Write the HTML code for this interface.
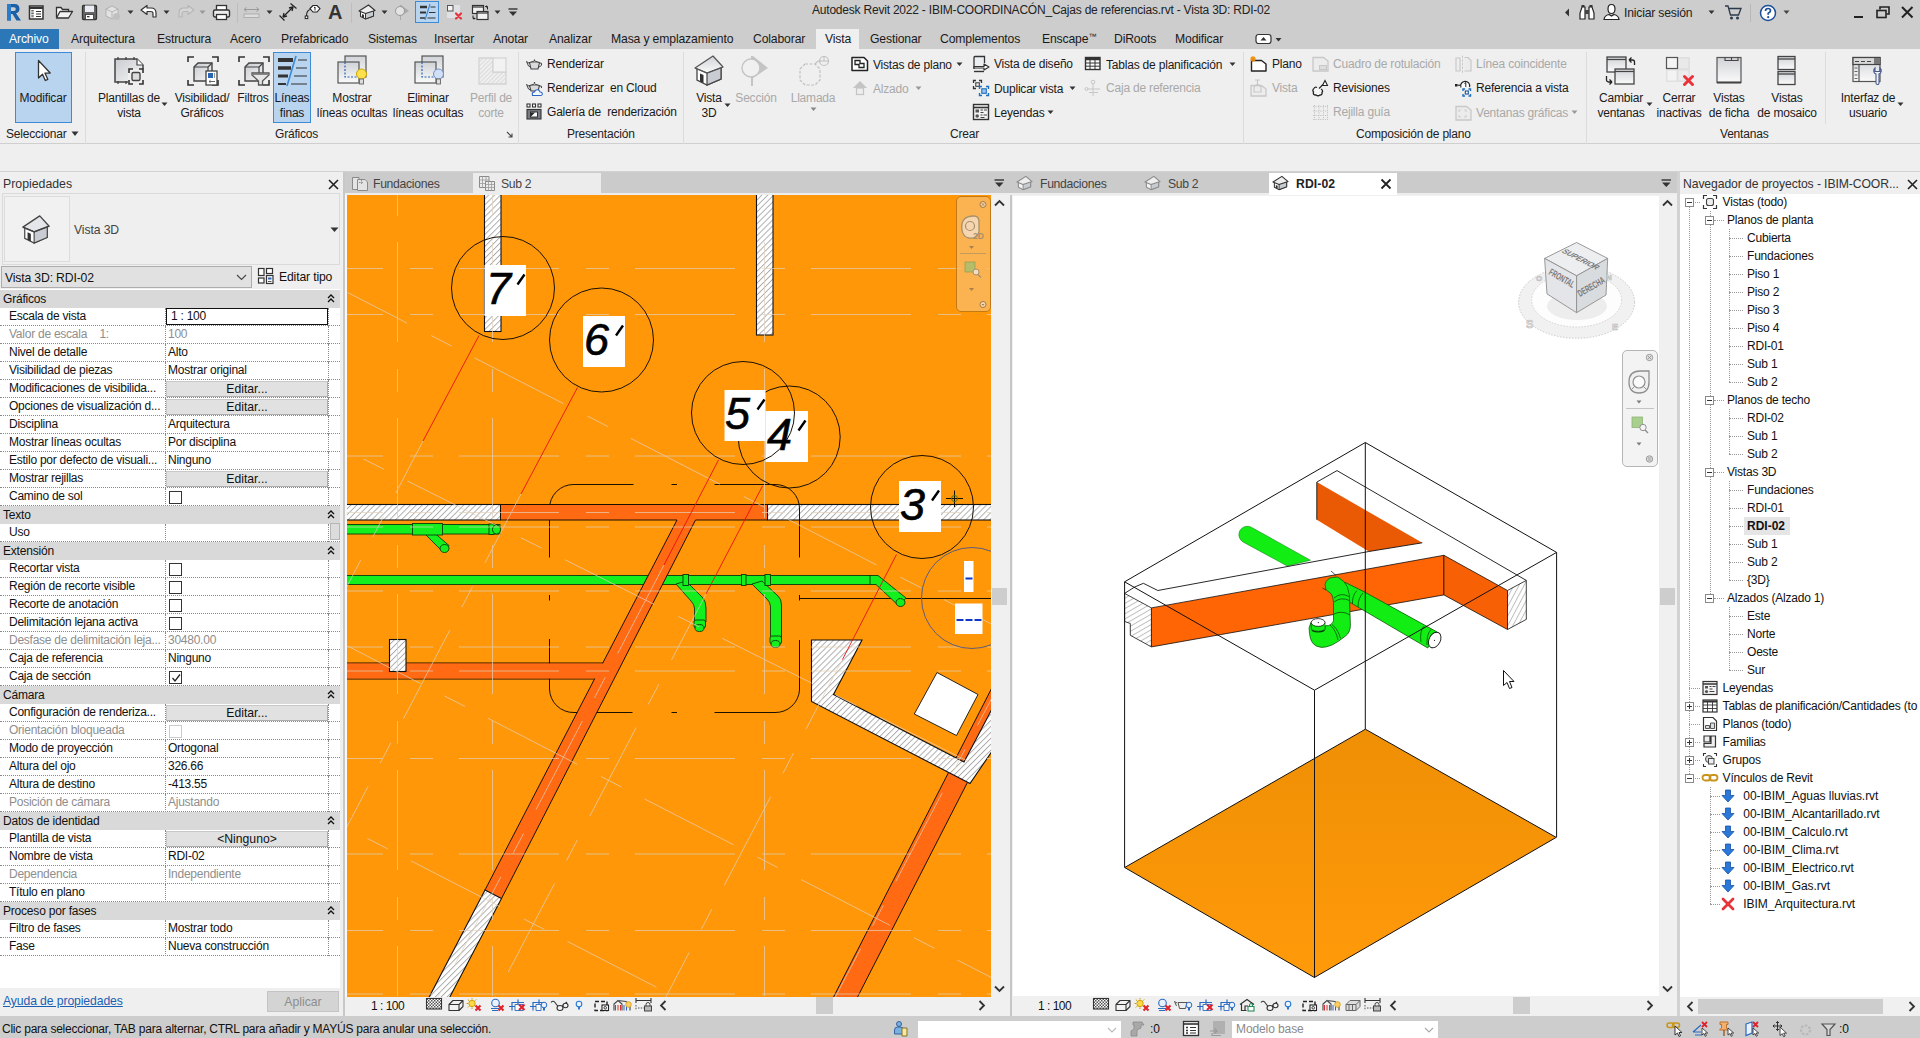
<!DOCTYPE html>
<html><head><meta charset="utf-8">
<style>
*{box-sizing:border-box;margin:0;padding:0}
html,body{width:1920px;height:1038px;overflow:hidden;background:#cdcdcd;font-family:"Liberation Sans",sans-serif;font-size:12px;color:#1a1a1a}
.abs{position:absolute}
#title{left:0;top:0;width:1920px;height:26px;background:#cdcdcd}
#title .t{position:absolute;left:812px;top:3px;font-size:12px;letter-spacing:-0.21px;color:#222;white-space:nowrap}
#tabs{left:0;top:26px;width:1920px;height:23px;background:#cdcdcd}
#tabs span{position:absolute;top:6px;font-size:12.2px;letter-spacing:-0.15px;white-space:nowrap;color:#1a1a1a}
#archivo{position:absolute;left:0;top:3px;width:59px;height:20px;background:#2b77b7}
#vistatab{position:absolute;left:816px;top:3px;width:43px;height:21px;background:#efefef}
#ribbon{left:0;top:49px;width:1920px;height:95px;background:#efefef;border-bottom:1px solid #cfcfcf}
#below{left:0;top:144px;width:1920px;height:28px;background:#efefef;border-bottom:1px solid #d2d2d2}
.rl{position:absolute;font-size:12px;letter-spacing:-0.2px;white-space:nowrap;color:#1a1a1a;text-align:center;line-height:15px;margin-top:1px}
.rl.dis{color:#a9a9a9}
.sep{position:absolute;top:52px;width:1px;height:92px;background:#dcdcdc}
.pt{position:absolute;top:127px;font-size:12px;letter-spacing:-0.2px;color:#222;white-space:nowrap}
svg{position:absolute;overflow:visible}
/* properties */
#props{left:0;top:172px;width:343px;height:846px;background:#efefef}
#props .hd{position:absolute;left:3px;top:5px;font-size:12.3px;color:#333}
.prow{position:absolute;left:0;width:340px;height:18px;background:#fff;border-bottom:1px dotted #8a8a8a}
.prow .l{position:absolute;left:9px;top:1px;white-space:nowrap;font-size:12px;letter-spacing:-0.25px;color:#111}
.prow .v{position:absolute;left:168px;top:1px;white-space:nowrap;font-size:12px;letter-spacing:-0.25px;color:#111}
.prow.g .l,.prow.g .v{color:#8e8e8e}
.prow:before{content:"";position:absolute;left:165px;top:0;width:0;height:18px;border-left:1px dotted #8a8a8a}
.prow:after{content:"";position:absolute;left:328px;top:0;width:0;height:18px;border-left:1px dotted #8a8a8a}
.phead{position:absolute;left:0;width:340px;height:18px;background:#d9d9d9}
.phead span{position:absolute;left:3px;top:2px;font-size:12px;letter-spacing:-0.2px;color:#111}
.pbtn{position:absolute;left:166px;top:1px;width:162px;height:16px;background:#e1e1e1;border:1px solid #adadad;border-top-color:#c8c8c8;border-left-color:#c8c8c8;text-align:center;font-size:12.2px;line-height:14px;color:#111}
.cb{position:absolute;left:169px;top:3px;width:13px;height:13px;border:1px solid #333;background:#fff}
/* view areas */
.vtabs{top:172px;height:23px;background:#cbcbcb}
.vtab{position:absolute;font-size:12.2px;letter-spacing:-0.3px;color:#444;white-space:nowrap}
#browser{left:1680px;top:172px;width:240px;height:844px;background:#fff;overflow:hidden}
.tn{position:absolute;font-size:12px;letter-spacing:-0.2px;white-space:nowrap;color:#111;line-height:16px}
#status{left:0;top:1016px;width:1920px;height:22px;background:#cdcdcd}
</style></head><body>
<div id="title" class="abs"><span class="t">Autodesk Revit 2022 - IBIM-COORDINACÓN_Cajas de referencias.rvt - Vista 3D: RDI-02</span>
<!-- R logo -->
<svg style="left:5px;top:2px" width="18" height="20" viewBox="0 0 18 20"><path d="M2 2 H9.500 Q14.500 2 14.500 6.800 Q14.500 10.500 11 11.300 L16 18.500 H11.500 L7.500 12 H6 V18.500 H2 Z M6 5.200 V9 H9 Q10.800 9 10.800 7.100 Q10.800 5.200 9 5.200 Z" fill="#1b5fa8" fill-rule="evenodd"/><path d="M2 2 H6 V18.500 H2 Z" fill="#2a7cc9"/></svg>
<!-- properties-ish icon -->
<svg style="left:28px;top:4px" width="17" height="17" viewBox="0 0 17 17"><rect x="1.500" y="2" width="13.500" height="13" fill="#fff" stroke="#333" stroke-width="1.500"/><path d="M1.500 4h13.500" stroke="#333" stroke-width="2"/><path d="M4.500 6v8" stroke="#666" stroke-width="2.500" stroke-dasharray="1.600 1"/><path d="M8 7.500h5M8 10h5M8 12.500h5" stroke="#333" stroke-width="1.100"/></svg>
<!-- open folder -->
<svg style="left:55px;top:5px" width="19" height="15" viewBox="0 0 19 15"><path d="M1.500 12.500 V2.500 H6 L7.500 4.500 H13.500 V6.500" fill="#fff" stroke="#333" stroke-width="1.300"/><path d="M1.500 13 L5 6.500 H17.500 L13.500 13 Z" fill="#f3f3f3" stroke="#333" stroke-width="1.300" stroke-linejoin="round"/></svg>
<!-- save -->
<svg style="left:81px;top:4px" width="17" height="17" viewBox="0 0 17 17"><rect x="1.500" y="1.500" width="14" height="14" rx="1" fill="#666" stroke="#333" stroke-width="1.300"/><rect x="4" y="1.500" width="9" height="6.500" fill="#e9ecf2"/><rect x="4.500" y="10.500" width="8" height="5" fill="#fff" stroke="#333" stroke-width="0.800"/><rect x="6" y="12" width="2.500" height="1.300" fill="#333"/></svg>
<!-- sync disabled -->
<svg style="left:104px;top:4px" width="19" height="18" viewBox="0 0 19 18"><path d="M2 5 L8 2 L14 5 V12 L8 15 L2 12 Z" fill="#e3e3e3" stroke="#b5b5b5" stroke-width="1.100"/><path d="M2 5 L8 8 L14 5 M8 8 V15" fill="none" stroke="#b5b5b5" stroke-width="1"/><circle cx="12.500" cy="12.500" r="3.500" fill="#c0c0c0"/></svg>
<svg style="left:127px;top:10px" width="7" height="5"><path d="M0.500 0.500h6l-3 3.500z" fill="#333"/></svg>
<!-- undo -->
<svg style="left:140px;top:4px" width="18" height="15" viewBox="0 0 18 15"><path d="M1 6 L7 1.500 V4 H11 Q16 4 16 9 V13 H13 V9.500 Q13 7.500 10.500 7.500 H7 V10.500 Z" fill="#fff" stroke="#333" stroke-width="1.200" stroke-linejoin="round"/></svg>
<svg style="left:163px;top:10px" width="7" height="5"><path d="M0.500 0.500h6l-3 3.500z" fill="#333"/></svg>
<!-- redo disabled -->
<svg style="left:177px;top:4px" width="18" height="15" viewBox="0 0 18 15"><path d="M17 6 L11 1.500 V4 H7 Q2 4 2 9 V13 H5 V9.500 Q5 7.500 7.500 7.500 H11 V10.500 Z" fill="#d6d6d6" stroke="#b5b5b5" stroke-width="1.100" stroke-linejoin="round"/></svg>
<svg style="left:199px;top:10px" width="7" height="5"><path d="M0.500 0.500h6l-3 3.500z" fill="#999"/></svg>
<!-- print -->
<svg style="left:212px;top:4px" width="19" height="17" viewBox="0 0 19 17"><rect x="4.500" y="1.500" width="10" height="5" fill="#fff" stroke="#333" stroke-width="1.300"/><rect x="1.500" y="6" width="16" height="7" rx="1.500" fill="#eee" stroke="#333" stroke-width="1.400"/><rect x="4.500" y="10.500" width="10" height="5" fill="#fff" stroke="#333" stroke-width="1.300"/></svg>
<div class="abs" style="left:237px;top:3px;width:1px;height:20px;background:#bdbdbd"></div>
<!-- measure disabled -->
<svg style="left:243px;top:6px" width="17" height="13" viewBox="0 0 17 13"><path d="M1 3.500h15M1 3.500l2.500-2M1 3.500l2.500 2M16 3.500l-2.500-2M16 3.500l-2.500 2" stroke="#9a9a9a" stroke-width="1" fill="none"/><rect x="1" y="8" width="15" height="3.500" fill="#ddd" stroke="#aaa" stroke-width="0.900"/></svg>
<svg style="left:266px;top:10px" width="7" height="5"><path d="M0.500 0.500h6l-3 3.500z" fill="#333"/></svg>
<!-- aligned dimension -->
<svg style="left:279px;top:3px" width="18" height="18" viewBox="0 0 18 18"><path d="M4 14 L14 4" stroke="#222" stroke-width="1.300"/><path d="M14 4 L10 5 M14 4 L13 8 M4 14 L8 13 M4 14 L5 10" stroke="#222" stroke-width="1.300"/><path d="M11.500 0.500 L17.500 5.500 M0.500 12.500 L5.500 17.500" stroke="#222" stroke-width="1.200"/></svg>
<!-- tag -->
<svg style="left:304px;top:4px" width="17" height="16" viewBox="0 0 17 16"><path d="M6 4.500 L9 1.500 H13 L16 4.500 L13 8 H9 Z" fill="#fff" stroke="#222" stroke-width="1.100"/><path d="M11 3v3.500M10 3.800l1-0.800" stroke="#222" stroke-width="1" fill="none"/><path d="M6.500 5.500 Q2.500 6 2.500 12" fill="none" stroke="#222" stroke-width="1.100"/><rect x="1.200" y="12" width="2.600" height="2.600" fill="#fff" stroke="#222" stroke-width="1"/></svg>
<!-- A text -->
<div class="abs" style="left:328px;top:0px;font-size:20px;font-weight:bold;color:#333;line-height:24px">A</div>
<div class="abs" style="left:351px;top:3px;width:1px;height:20px;background:#bdbdbd"></div>
<!-- 3D house small -->
<svg style="left:358px;top:4px" width="18" height="16" viewBox="0 0 18 16"><path d="M2.500 7.500 V12.500 L7.500 15 L15.500 12 V6.500" fill="#fff" stroke="#333" stroke-width="1.100"/><path d="M7.500 15 V9 L15.500 6.500 V12 Z" fill="#c8cbd0" stroke="#333" stroke-width="1"/><path d="M1 7 L10.500 1 L17 6.500 L7.500 9.500 Z" fill="#eee" stroke="#333" stroke-width="1.200" stroke-linejoin="round"/><path d="M4 10 L6 11 V14.200 L4 13.200Z" fill="#333"/></svg>
<svg style="left:381px;top:10px" width="7" height="5"><path d="M0.500 0.500h6l-3 3.500z" fill="#333"/></svg>
<!-- section gray -->
<svg style="left:394px;top:4px" width="16" height="17" viewBox="0 0 16 17"><path d="M7 1 L15 7 L7 12 V16 H6 V1 Z" fill="#aaa"/><circle cx="6" cy="7" r="4.500" fill="#e3e3e3" stroke="#999" stroke-width="1"/></svg>
<!-- thin lines active -->
<div class="abs" style="left:415px;top:1px;width:24px;height:22px;background:#b9d4ef;border:1px solid #3d8ad6"></div>
<svg style="left:419px;top:4px" width="17" height="16" viewBox="0 0 17 16"><path d="M1 3h7" stroke="#333" stroke-width="2.500"/><path d="M1 8.500h6" stroke="#333" stroke-width="2"/><path d="M1 14h5" stroke="#333" stroke-width="1.500"/><path d="M11.500 3h5M10 8.500h6.500M8.500 14h8" stroke="#333" stroke-width="1"/><path d="M11 0 L6 16" stroke="#3d8ad6" stroke-width="1.200"/></svg>
<!-- close inactive -->
<svg style="left:446px;top:4px" width="18" height="17" viewBox="0 0 18 17"><rect x="1" y="1" width="13" height="13" fill="#dfe1e4"/><rect x="1.500" y="1.500" width="5.500" height="5.500" fill="#f4f4f4" stroke="#555" stroke-width="1"/><path d="M7.500 7.500h0" /><path d="M10 9.500 L15 14.500 M15 9.500 L10 14.500" stroke="#e8333a" stroke-width="2.200" stroke-linecap="round"/></svg>
<!-- switch windows -->
<svg style="left:471px;top:4px" width="19" height="17" viewBox="0 0 19 17"><rect x="1.500" y="1.500" width="11" height="8" fill="#f2f2f2" stroke="#333" stroke-width="1.200"/><path d="M1.500 3h11" stroke="#333" stroke-width="1.200"/><rect x="6" y="7.500" width="11" height="8" fill="#f2f2f2" stroke="#333" stroke-width="1.200"/><path d="M6 9h11" stroke="#333" stroke-width="1.200"/><path d="M14.500 2.500h2v3M14.500 2.500l1-1M14.500 2.500l1 1" stroke="#222" stroke-width="1" fill="none"/><path d="M4 14.500h-2v-3M4 14.500l-1-1M4 14.500l-1 1" stroke="#222" stroke-width="1" fill="none"/></svg>
<svg style="left:494px;top:10px" width="7" height="5"><path d="M0.500 0.500h6l-3 3.500z" fill="#333"/></svg>
<svg style="left:508px;top:8px" width="10" height="9"><path d="M0.500 1h9" stroke="#333" stroke-width="1.400"/><path d="M1 3.500h8l-4 4.500z" fill="#333"/></svg>
<!-- right side title items -->
<svg style="left:1564px;top:8px" width="6" height="9"><path d="M5 0.500v8l-4-4z" fill="#333"/></svg>
<svg style="left:1578px;top:4px" width="18" height="17" viewBox="0 0 18 17"><path d="M2 15 V9 L4 3 H7 V15 Z M16 15 V9 L14 3 H11 V15 Z" fill="#fff" stroke="#222" stroke-width="1.200"/><rect x="7" y="6" width="4" height="4" fill="#444"/><rect x="3.500" y="1" width="3" height="2" fill="#333"/><rect x="11.500" y="1" width="3" height="2" fill="#333"/></svg>
<svg style="left:1603px;top:3px" width="17" height="18" viewBox="0 0 17 18"><path d="M8.500 1.500 Q12 1.500 12 6 Q12 10.500 8.500 10.500 Q5 10.500 5 6 Q5 1.500 8.500 1.500Z" fill="#fff" stroke="#222" stroke-width="1.200"/><path d="M1 16.500 Q1.500 12.500 6 11.500 L8.500 13 L11 11.500 Q15.500 12.500 16 16.500 Z" fill="#fff" stroke="#222" stroke-width="1.200"/></svg>
<div class="abs" style="left:1624px;top:6px;font-size:12.200px;letter-spacing:-0.200px;color:#222;white-space:nowrap">Iniciar sesión</div>
<svg style="left:1708px;top:10px" width="7" height="5"><path d="M0.500 0.500h6l-3 3.500z" fill="#333"/></svg>
<svg style="left:1724px;top:4px" width="18" height="17" viewBox="0 0 18 17"><path d="M1 2h3l2.500 9h8L17 4.500H5" fill="none" stroke="#2b3a4a" stroke-width="1.300"/><circle cx="7.500" cy="14" r="1.500" fill="#2b3a4a"/><circle cx="13.500" cy="14" r="1.500" fill="#2b3a4a"/></svg>
<div class="abs" style="left:1750px;top:4px;width:1px;height:18px;background:#b8b8b8"></div>
<svg style="left:1759px;top:4px" width="18" height="18" viewBox="0 0 18 18"><circle cx="9" cy="9" r="7.500" fill="#fff" stroke="#1b4f98" stroke-width="1.500"/><path d="M6.500 7 Q6.500 4.500 9 4.500 Q11.500 4.500 11.500 6.800 Q11.500 8.200 9.200 9.300 V10.800" fill="none" stroke="#1b4f98" stroke-width="1.700"/><circle cx="9.200" cy="13.200" r="1.100" fill="#1b4f98"/></svg>
<svg style="left:1783px;top:10px" width="7" height="5"><path d="M0.500 0.500h6l-3 3.500z" fill="#444"/></svg>
<div class="abs" style="left:1854px;top:16px;width:9px;height:2px;background:#222"></div>
<svg style="left:1876px;top:6px" width="14" height="13" viewBox="0 0 14 13"><path d="M4 3.500V1h9v7h-2.500" fill="none" stroke="#222" stroke-width="1.600"/><rect x="1" y="4.500" width="9" height="7" fill="none" stroke="#222" stroke-width="1.600"/></svg>
<svg style="left:1901px;top:6px" width="13" height="13"><path d="M1 1L11.500 11.500M11.500 1L1 11.500" stroke="#222" stroke-width="2"/></svg>

</div>
<div id="tabs" class="abs">
<div id="archivo"></div><div id="vistatab"></div>
<span style="left:9px;color:#fff">Archivo</span>
<span style="left:71px">Arquitectura</span>
<span style="left:157px">Estructura</span>
<span style="left:230px">Acero</span>
<span style="left:281px">Prefabricado</span>
<span style="left:368px">Sistemas</span>
<span style="left:434px">Insertar</span>
<span style="left:493px">Anotar</span>
<span style="left:549px">Analizar</span>
<span style="left:611px">Masa y emplazamiento</span>
<span style="left:753px">Colaborar</span>
<span style="left:825px">Vista</span>
<span style="left:870px">Gestionar</span>
<span style="left:940px">Complementos</span>
<span style="left:1042px">Enscape<span style="position:static;font-size:8px;vertical-align:top;line-height:10px">™</span></span>
<span style="left:1114px">DiRoots</span>
<span style="left:1175px">Modificar</span>
</div>
<div id="ribbon" class="abs"></div>
<div id="below" class="abs"></div>
<!-- ribbon large buttons -->
<div class="abs" style="left:15px;top:52px;width:57px;height:71px;background:#b9d4ef;border:1px solid #3d8ad6"></div>
<div class="abs" style="left:273px;top:52px;width:38px;height:71px;background:#b9d4ef;border:1px solid #3d8ad6"></div>
<div class="sep" style="left:85px"></div><div class="sep" style="left:518px"></div><div class="sep" style="left:683px"></div>
<div class="sep" style="left:1243px"></div><div class="sep" style="left:1586px"></div><div class="sep" style="left:1825px;height:72px"></div>
<div class="rl" style="left:13px;width:60px;top:90px">Modificar</div>
<div class="rl" style="left:89px;width:80px;top:90px">Plantillas de<br>vista</div>
<div class="rl" style="left:162px;width:80px;top:90px">Visibilidad/<br>Gráficos</div>
<div class="rl" style="left:228px;width:50px;top:90px">Filtros</div>
<div class="rl" style="left:262px;width:60px;top:90px">Líneas<br>finas</div>
<div class="rl" style="left:302px;width:100px;top:90px">Mostrar<br>líneas ocultas</div>
<div class="rl" style="left:378px;width:100px;top:90px">Eliminar<br>líneas ocultas</div>
<div class="rl dis" style="left:461px;width:60px;top:90px">Perfil de<br>corte</div>
<div class="rl" style="left:679px;width:60px;top:90px">Vista<br>3D</div>
<div class="rl dis" style="left:726px;width:60px;top:90px">Sección</div>
<div class="rl dis" style="left:783px;width:60px;top:90px">Llamada</div>
<div class="rl" style="left:1581px;width:80px;top:90px">Cambiar<br>ventanas</div>
<div class="rl" style="left:1639px;width:80px;top:90px">Cerrar<br>inactivas</div>
<div class="rl" style="left:1689px;width:80px;top:90px">Vistas<br>de ficha</div>
<div class="rl" style="left:1747px;width:80px;top:90px">Vistas<br>de mosaico</div>
<div class="rl" style="left:1828px;width:80px;top:90px">Interfaz de<br>usuario</div>
<!-- small button labels -->
<div class="rl" style="left:547px;top:56px">Renderizar</div>
<div class="rl" style="left:547px;top:80px">Renderizar&nbsp; en Cloud</div>
<div class="rl" style="left:547px;top:104px">Galería de&nbsp; renderización</div>
<div class="rl" style="left:873px;top:57px">Vistas de plano</div>
<div class="rl dis" style="left:873px;top:81px">Alzado</div>
<div class="rl" style="left:994px;top:56px">Vista de diseño</div>
<div class="rl" style="left:994px;top:81px">Duplicar vista</div>
<div class="rl" style="left:994px;top:105px">Leyendas</div>
<div class="rl" style="left:1106px;top:57px">Tablas de planificación</div>
<div class="rl dis" style="left:1106px;top:80px">Caja de referencia</div>
<div class="rl" style="left:1272px;top:56px">Plano</div>
<div class="rl dis" style="left:1272px;top:80px">Vista</div>
<div class="rl dis" style="left:1333px;top:56px">Cuadro de rotulación</div>
<div class="rl" style="left:1333px;top:80px">Revisiones</div>
<div class="rl dis" style="left:1333px;top:104px">Rejilla guía</div>
<div class="rl dis" style="left:1476px;top:56px">Línea coincidente</div>
<div class="rl" style="left:1476px;top:80px">Referencia a vista</div>
<div class="rl dis" style="left:1476px;top:105px">Ventanas gráficas</div>
<!-- panel titles -->
<div class="pt" style="left:6px">Seleccionar</div>
<div class="pt" style="left:275px">Gráficos</div>
<div class="pt" style="left:567px">Presentación</div>
<div class="pt" style="left:950px">Crear</div>
<div class="pt" style="left:1356px">Composición de plano</div>
<div class="pt" style="left:1720px">Ventanas</div>
<svg width="0" height="0"><defs>
<linearGradient id="gg" x1="0" y1="0" x2="1" y2="1"><stop offset="0" stop-color="#c9ccd0"/><stop offset="1" stop-color="#f6f6f6"/></linearGradient>
<linearGradient id="gg2" x1="0" y1="0" x2="0" y2="1"><stop offset="0" stop-color="#d0d3d7"/><stop offset="1" stop-color="#fafafa"/></linearGradient>
</defs></svg>
<!-- Modificar cursor -->
<svg style="left:27px;top:54px" width="32" height="32" viewBox="0 0 32 32"><path d="M11.5 6.5 L11.5 24 L15.5 20.2 L18.3 26.5 L20.8 25.3 L18 19.2 L23.2 19 Z" fill="#fff" stroke="#333" stroke-width="1.3" stroke-linejoin="round"/></svg>
<!-- Plantillas de vista -->
<svg style="left:113px;top:55px" width="32" height="32" viewBox="0 0 32 32"><path d="M2 4 H24 L30 10 V27 H2 Z" fill="url(#gg)" stroke="#444" stroke-width="1.5"/><path d="M24 4 V10 H30" fill="#fff" stroke="#444" stroke-width="1.2"/><path d="M5 2v3M13 2v3M21 2v3M5 26v3M13 26v3" stroke="#444" stroke-width="1.3"/><rect x="15" y="14" width="16" height="16" fill="#efefef"/><path d="M16 18v-4h4M26 14h4v4M30 25v4h-4M20 29h-4v-4" fill="none" stroke="#333" stroke-width="1.6"/><rect x="19" y="17.500" width="8" height="8" rx="1.500" fill="#ddd" stroke="#444" stroke-width="1.4"/></svg>
<!-- Visibilidad/Graficos -->
<svg style="left:187px;top:55px" width="32" height="32" viewBox="0 0 32 32"><path d="M1 7V2h6M25 2h6v5M31 25v5h-6M7 30H1v-5" fill="none" stroke="#333" stroke-width="1.6"/><path d="M7 12 L11 8 H25 V22 L21 26 H7 Z" fill="url(#gg)" stroke="#444" stroke-width="1.4"/><path d="M7 12 H21 V26 M21 12 L25 8" fill="none" stroke="#444" stroke-width="1.2"/><rect x="19" y="16" width="11" height="14" fill="#fff" stroke="#444" stroke-width="1.3"/><rect x="21" y="18" width="5" height="5" fill="#2b63b5"/><path d="M27.500 18v5" stroke="#999" stroke-width="1.2"/><path d="M22 26.500h6M22 26.500l1.500-1.200M22 26.500l1.500 1.200" stroke="#555" stroke-width="0.9"/></svg>
<!-- Filtros -->
<svg style="left:238px;top:55px" width="32" height="32" viewBox="0 0 32 32"><path d="M1 7V2h6M25 2h6v5M31 25v5h-6M7 30H1v-5" fill="none" stroke="#333" stroke-width="1.6"/><path d="M7 12 L11 8 H25 V22 L21 26 H7 Z" fill="url(#gg)" stroke="#444" stroke-width="1.4"/><path d="M7 12 H21 V26 M21 12 L25 8" fill="none" stroke="#444" stroke-width="1.2"/><path d="M14 18 H31 V20 L24.500 26 V30 H20.500 V26 L14 20 Z" fill="#e6e6e6" stroke="#555" stroke-width="1.3"/><path d="M14 19.500h17" stroke="#888" stroke-width="1"/></svg>
<!-- Lineas finas -->
<svg style="left:276px;top:55px" width="32" height="32" viewBox="0 0 32 32"><path d="M2 5h15" stroke="#333" stroke-width="4"/><path d="M2 13h13" stroke="#333" stroke-width="3.500"/><path d="M2 21h10" stroke="#333" stroke-width="3"/><path d="M2 29h8" stroke="#333" stroke-width="2"/><path d="M22 5h9M20 13h11M18 21h13M15 29h16" stroke="#333" stroke-width="1.100"/><path d="M20 1 L11 31" stroke="#3d8ad6" stroke-width="1.600"/></svg>
<!-- Mostrar lineas ocultas -->
<svg style="left:336px;top:54px" width="32" height="32" viewBox="0 0 32 32"><rect x="9" y="2" width="21" height="21" fill="url(#gg2)" stroke="#555" stroke-width="1.200"/><rect x="2" y="8" width="21" height="21" fill="url(#gg2)" stroke="#555" stroke-width="1.200"/><path d="M9 8v15h14" fill="none" stroke="#2b63b5" stroke-width="1.200" stroke-dasharray="2 1.500"/><circle cx="25.500" cy="20" r="5" fill="#ffe14d" stroke="#c9a400" stroke-width="1"/><rect x="23.500" y="25" width="4" height="5" fill="#ddd" stroke="#666" stroke-width="0.900"/></svg>
<!-- Eliminar lineas ocultas -->
<svg style="left:413px;top:54px" width="32" height="32" viewBox="0 0 32 32"><rect x="9" y="2" width="21" height="21" fill="url(#gg2)" stroke="#555" stroke-width="1.200"/><rect x="2" y="8" width="21" height="21" fill="url(#gg2)" stroke="#555" stroke-width="1.200"/><path d="M9 8v15h14" fill="none" stroke="#2b63b5" stroke-width="1.200" stroke-dasharray="2 1.500"/><circle cx="25.500" cy="20" r="5" fill="#cfe0f7" stroke="#6f8fc9" stroke-width="1"/><rect x="23.500" y="25" width="4" height="5" fill="#ddd" stroke="#666" stroke-width="0.900"/></svg>
<!-- Perfil de corte (disabled) -->
<svg style="left:477px;top:55px" width="32" height="32" viewBox="0 0 32 32"><defs><pattern id="hp" width="3" height="3" patternUnits="userSpaceOnUse" patternTransform="rotate(-45)"><path d="M0 0h3" stroke="#cfcfcf" stroke-width="1.200"/></pattern></defs><path d="M2 3h14v14h13v12H2z" fill="url(#hp)" stroke="#d4d4d4" stroke-width="1.300"/><rect x="16" y="3" width="13" height="14" fill="#f2f2f2" stroke="#d4d4d4" stroke-width="1.300"/></svg>
<!-- Vista 3D house -->
<svg style="left:693px;top:54px" width="32" height="32" viewBox="0 0 32 32"><path d="M4 15 L4 26 L14 31 L28 25 L28 14" fill="#fff" stroke="#444" stroke-width="1.300"/><path d="M14 31 V18 L28 13 V25 Z" fill="#c9ccd2" stroke="#444" stroke-width="1.200"/><path d="M2 14 L20 2 L30 13 L14 19 Z" fill="url(#gg2)" stroke="#555" stroke-width="1.200" stroke-linejoin="round"/><path d="M2 14 L14 19 L30 13" fill="none" stroke="#555" stroke-width="1.200"/><path d="M7 19.500 L10.500 21 V29 L7 27.500 Z" fill="#333"/></svg>
<!-- Seccion disabled -->
<svg style="left:740px;top:54px" width="32" height="32" viewBox="0 0 32 32"><path d="M13 2 L28 14 L13 24 V32 H11 V2 Z" fill="#c4c4c4"/><circle cx="11" cy="14" r="9" fill="#f0f0f0" stroke="#c4c4c4" stroke-width="1.400"/></svg>
<!-- Llamada disabled -->
<svg style="left:797px;top:54px" width="32" height="32" viewBox="0 0 32 32"><path d="M8 10 H18 L23 15 V26 L18 31 H8 L3 26 V15 Z" fill="none" stroke="#c0c0c0" stroke-width="1.200" stroke-dasharray="3 1.500"/><path d="M18 10 L21 7 H24" fill="none" stroke="#c0c0c0" stroke-width="1.100"/><circle cx="27" cy="7" r="4.500" fill="none" stroke="#c0c0c0" stroke-width="1.200"/><path d="M22.500 7h9M27 2.500v4.500" stroke="#c0c0c0" stroke-width="1"/></svg>
<!-- Cambiar ventanas -->
<svg style="left:1605px;top:55px" width="32" height="32" viewBox="0 0 32 32"><rect x="2" y="2" width="19" height="15" fill="url(#gg2)" stroke="#444" stroke-width="1.300"/><path d="M2 4.500h19" stroke="#444" stroke-width="1.200"/><rect x="10" y="14" width="19" height="15" fill="url(#gg2)" stroke="#444" stroke-width="1.300"/><path d="M10 16.500h19" stroke="#444" stroke-width="1.200"/><path d="M24 5 h3.500 a2 2 0 0 1 2 2 v3 M24 5 l2.500 -2.500 M24 5 l2.500 2.500" fill="none" stroke="#222" stroke-width="1.300"/><path d="M7 27 h-3.500 a2 2 0 0 1 -2 -2 v-4 M7 27 l-2.500 -2.500 M7 27 l-2.500 2.500" fill="none" stroke="#222" stroke-width="1.300"/></svg>
<!-- Cerrar inactivas -->
<svg style="left:1664px;top:55px" width="32" height="32" viewBox="0 0 32 32"><rect x="2" y="2" width="24" height="25" fill="#e3e5e8"/><rect x="14" y="3" width="11" height="11" fill="#e9e9ea" stroke="#d8d8d8" stroke-width="0.800"/><rect x="3" y="15" width="10" height="11" fill="#f3f3f3" stroke="#dcdcdc" stroke-width="0.800"/><rect x="14" y="15" width="11" height="11" fill="#ececec" stroke="#dcdcdc" stroke-width="0.800"/><rect x="2.500" y="2.500" width="11" height="11" fill="#f4f4f4" stroke="#555" stroke-width="1.200"/><path d="M20.500 21.500 L28.500 29.500 M28.500 21.500 L20.500 29.500" stroke="#e8333a" stroke-width="3" stroke-linecap="round"/></svg>
<!-- Vistas de ficha -->
<svg style="left:1713px;top:55px" width="32" height="32" viewBox="0 0 32 32"><rect x="4" y="2.500" width="24" height="25" fill="url(#gg2)" stroke="#555" stroke-width="1.200"/><path d="M4 27.500h24" stroke="#444" stroke-width="2"/><path d="M12 2.500v3h13v-3M18.500 2.500v3" fill="none" stroke="#444" stroke-width="1.100"/></svg>
<!-- Vistas de mosaico -->
<svg style="left:1771px;top:55px" width="32" height="32" viewBox="0 0 32 32"><rect x="7" y="1.500" width="17" height="13" fill="url(#gg2)" stroke="#444" stroke-width="1.300"/><path d="M7 4h17" stroke="#444" stroke-width="1.300"/><rect x="7" y="16.500" width="17" height="13" fill="url(#gg2)" stroke="#444" stroke-width="1.300"/><path d="M7 19h17" stroke="#444" stroke-width="1.300"/></svg>
<!-- Interfaz de usuario -->
<svg style="left:1851px;top:55px" width="32" height="32" viewBox="0 0 32 32"><rect x="2" y="2.500" width="27" height="24" fill="url(#gg2)" stroke="#555" stroke-width="1.200"/><rect x="2" y="2.500" width="27" height="7" fill="#d9d9d9" stroke="#444" stroke-width="1.200"/><rect x="23" y="3" width="5.500" height="6" fill="#777"/><path d="M4 6.500h4M10 6.500h4M16 6.500h4" stroke="#444" stroke-width="1.100"/><path d="M8 9.500v17" stroke="#444" stroke-width="1.100"/><path d="M3.500 13h3M3.500 16.500h3M3.500 20h3M3.500 23.500h3" stroke="#666" stroke-width="1"/><path d="M24 13 a3.500 3.500 0 0 0 1 6 v9 a1.500 1.500 0 0 0 3 0 v-9 a3.500 3.500 0 0 0 1 -6 v3.500 h-5 Z" fill="#eef1fa" stroke="#4a5a8a" stroke-width="1.100"/></svg>
<!-- dropdown arrows for big buttons -->
<svg style="left:161px;top:102px" width="8" height="5"><path d="M0.500 0.500h6l-3 3.500z" fill="#333"/></svg>
<svg style="left:724px;top:103px" width="8" height="5"><path d="M0.500 0.500h6l-3 3.500z" fill="#333"/></svg>
<svg style="left:810px;top:107px" width="8" height="5"><path d="M0.500 0.500h6l-3 3.500z" fill="#888"/></svg>
<svg style="left:1646px;top:102px" width="8" height="5"><path d="M0.500 0.500h6l-3 3.500z" fill="#333"/></svg>
<svg style="left:1897px;top:102px" width="8" height="5"><path d="M0.500 0.500h6l-3 3.500z" fill="#333"/></svg>
<svg style="left:71px;top:131px" width="9" height="6"><path d="M0.500 0.500h7l-3.500 4.500z" fill="#333"/></svg>
<svg style="left:506px;top:131px" width="8" height="8"><path d="M1 1L6 6M6 2.500V6H2.500" stroke="#444" stroke-width="1.100" fill="none"/></svg>
<!-- Renderizar teapot -->
<svg style="left:526px;top:57px" width="17" height="16" viewBox="0 0 17 16"><path d="M3.500 5.500 H13.500 L12 12 H5 Z" fill="#d9dadc" stroke="#444" stroke-width="1.100"/><path d="M3.500 5.500 Q8.500 2.500 13.500 5.500" fill="#eee" stroke="#444" stroke-width="1"/><path d="M8.500 2.500v1.500" stroke="#444" stroke-width="1.200"/><path d="M3.500 6.500 L0.500 4.500 L2.500 9 L4.300 10" fill="none" stroke="#444" stroke-width="1"/><path d="M13.500 6 Q16.500 5.500 15.500 8 Q14.500 10 12.700 10" fill="none" stroke="#444" stroke-width="1"/></svg>
<!-- Renderizar en cloud -->
<svg style="left:526px;top:80px" width="17" height="17" viewBox="0 0 17 17"><path d="M3.500 5.500 H13.500 L12 11 H5 Z" fill="#d9dadc" stroke="#444" stroke-width="1.100"/><path d="M3.500 5.500 Q8.500 2.500 13.500 5.500" fill="#eee" stroke="#444" stroke-width="1"/><path d="M8.500 2v1.500" stroke="#444" stroke-width="1.200"/><path d="M3.500 6.500 L0.500 4.500 L2.500 9 L4.300 10" fill="none" stroke="#444" stroke-width="1"/><path d="M13.500 6 Q16.500 5.500 15.500 8" fill="none" stroke="#444" stroke-width="1"/><path d="M6.500 15.500 H14.500 Q16.500 15.500 16.300 13.500 Q16 11.800 14 12 Q13.500 9.500 11 9.800 Q9 10 8.500 12 Q5.500 12 6.500 15.500Z" fill="#f4f8ff" stroke="#2b63c5" stroke-width="1.100"/></svg>
<!-- Galeria -->
<svg style="left:526px;top:103px" width="17" height="17" viewBox="0 0 17 17"><rect x="1" y="1" width="3" height="3" fill="#fff" stroke="#333" stroke-width="1.100"/><rect x="6.500" y="1" width="3" height="3" fill="#fff" stroke="#333" stroke-width="1.100"/><rect x="12" y="1" width="3" height="3" fill="#fff" stroke="#333" stroke-width="1.100"/><rect x="1" y="6.500" width="14" height="9.500" fill="#777b82" stroke="#333" stroke-width="1.100"/><rect x="4.500" y="9" width="7" height="5" fill="#fff" stroke="#222" stroke-width="0.900"/><path d="M5 9.500h4l-4 4z" fill="#222"/></svg>
<!-- Vistas de plano -->
<svg style="left:851px;top:56px" width="18" height="16" viewBox="0 0 18 16"><path d="M1 1.500 H13 L16.500 5 V14.500 H1 Z" fill="#fff" stroke="#222" stroke-width="1.500" stroke-linejoin="round"/><path d="M4 4.500 h5 v3 h4 v4 h-5 v-3 h-4 z" fill="none" stroke="#222" stroke-width="1.300"/></svg>
<!-- Alzado disabled -->
<svg style="left:852px;top:80px" width="16" height="16" viewBox="0 0 16 16"><path d="M8 1 L15 8 H1 Z" fill="#c4c4c4"/><rect x="4.500" y="8" width="7" height="6.500" fill="#ededed" stroke="#c4c4c4" stroke-width="1.200"/></svg>
<svg style="left:956px;top:62px" width="8" height="5"><path d="M0.500 0.500h6l-3 3.500z" fill="#333"/></svg>
<svg style="left:915px;top:86px" width="8" height="5"><path d="M0.500 0.500h6l-3 3.500z" fill="#999"/></svg>
<!-- Vista de diseño -->
<svg style="left:972px;top:55px" width="18" height="18" viewBox="0 0 18 18"><path d="M2 14V2.500 Q2 1.500 3 1.500 H12.500 V8" fill="#eceff2" stroke="#333" stroke-width="1.300"/><path d="M2 16.500 H12" stroke="#333" stroke-width="1.400"/><path d="M2 11.500 H12 V9 L17 12 L12 15 V13 H2 Z" fill="#fff" stroke="#333" stroke-width="1.200" stroke-linejoin="round"/></svg>
<!-- Duplicar vista -->
<svg style="left:972px;top:79px" width="18" height="18" viewBox="0 0 18 18"><path d="M1.500 4V1.500H4M7 1.500H9.500V4M9.500 7M4 9.500H1.500V7" fill="none" stroke="#333" stroke-width="1.300"/><rect x="3.800" y="3.800" width="3.500" height="3.500" fill="none" stroke="#333" stroke-width="1"/><path d="M7.500 10V7.500H10M14 7.500H16.500V10M16.500 14V16.500H14M10 16.500H7.500V14" fill="none" stroke="#1d6fc0" stroke-width="1.400"/><rect x="9.800" y="9.800" width="4.500" height="4.500" fill="#9cc3ee" stroke="#1d6fc0" stroke-width="1.100"/></svg>
<!-- Leyendas -->
<svg style="left:972px;top:103px" width="18" height="18" viewBox="0 0 18 18"><rect x="1.500" y="1.500" width="15" height="15" fill="#f4f4f4" stroke="#333" stroke-width="1.400"/><path d="M1.500 4.500h15" stroke="#333" stroke-width="1.600"/><rect x="3.500" y="6.500" width="3.500" height="3" fill="#555"/><circle cx="5.200" cy="13" r="1.800" fill="#555"/><path d="M8.500 7h2.500M12 7h3M8.500 9.500h3M8.500 12h2M11.500 12h3.500M8.500 14.500h4" stroke="#444" stroke-width="1.100"/></svg>
<svg style="left:1069px;top:86px" width="8" height="5"><path d="M0.500 0.500h6l-3 3.500z" fill="#333"/></svg>
<svg style="left:1047px;top:110px" width="8" height="5"><path d="M0.500 0.500h6l-3 3.500z" fill="#333"/></svg>
<!-- Tablas -->
<svg style="left:1084px;top:56px" width="18" height="16" viewBox="0 0 18 16"><rect x="1.500" y="1.500" width="14.500" height="12" fill="#fff" stroke="#333" stroke-width="1.400"/><path d="M1.500 3h14.500" stroke="#333" stroke-width="2.500"/><path d="M1.500 7h14.500M1.500 10.200h14.500M6 4v9.500M11 4v9.500" stroke="#333" stroke-width="1"/></svg>
<svg style="left:1229px;top:62px" width="8" height="5"><path d="M0.500 0.500h6l-3 3.500z" fill="#333"/></svg>
<!-- Caja de referencia disabled -->
<svg style="left:1084px;top:79px" width="18" height="18" viewBox="0 0 18 18"><circle cx="9" cy="3" r="1.800" fill="none" stroke="#c6c6c6" stroke-width="1"/><path d="M9 5v12M3 10h13M5 13.500h9" stroke="#c6c6c6" stroke-width="1"/><circle cx="2.500" cy="10" r="1.500" fill="none" stroke="#c6c6c6" stroke-width="1"/></svg>
<!-- Plano -->
<svg style="left:1249px;top:55px" width="19" height="18" viewBox="0 0 19 18"><path d="M2.500 5.500 H12.500 L17 9 V16 H2.500 Z" fill="#fff" stroke="#222" stroke-width="1.400" stroke-linejoin="round"/><path d="M4 1v6M1 4h6M2 2l4 4M6 2l-4 4" stroke="#f08a00" stroke-width="1.100"/></svg>
<!-- Vista disabled -->
<svg style="left:1249px;top:79px" width="19" height="18" viewBox="0 0 19 18"><path d="M2 6.500 H12.500 L17 10 V17 H2 Z" fill="#ececec" stroke="#c8c8c8" stroke-width="1.300"/><path d="M6 1h5M8.500 1v4M5 8l3.500-3l3.500 3v5h-7z" fill="none" stroke="#c8c8c8" stroke-width="1.100"/></svg>
<!-- Cuadro de rotulacion disabled -->
<svg style="left:1311px;top:55px" width="19" height="18" viewBox="0 0 19 18"><path d="M2 2.500 H12.500 L17 6 V16 H2 Z" fill="#ececec" stroke="#c8c8c8" stroke-width="1.300"/><rect x="8.500" y="10.500" width="7" height="4" fill="#ddd" stroke="#c8c8c8" stroke-width="1"/></svg>
<!-- Revisiones -->
<svg style="left:1311px;top:79px" width="19" height="18" viewBox="0 0 19 18"><path d="M3 9.500 Q1 11 2.500 13 Q1.500 16 5 16 Q7 17.500 9 16 Q11.500 16 11 13.500 Q12.500 11.500 10 10" fill="#f6f6f6" stroke="#222" stroke-width="1.300"/><path d="M3 9.500 Q4 7.500 6 8.500" fill="none" stroke="#222" stroke-width="1.300"/><path d="M8 9.500 L12 5.500" stroke="#222" stroke-width="1.100"/><path d="M11.500 6.500 L14 1.500 L16.500 6.500 Z" fill="#fff" stroke="#222" stroke-width="1.100"/></svg>
<!-- Rejilla guia disabled -->
<svg style="left:1312px;top:104px" width="17" height="17" viewBox="0 0 17 17"><path d="M1 2.500h15M1 7h15M1 11.500h15M1 15.500h15M2.500 1v15M7 1v15M11.500 1v15M15.500 1v15" stroke="#c4c4c4" stroke-width="1" stroke-dasharray="1.200 1.200"/></svg>
<!-- Linea coincidente disabled -->
<svg style="left:1454px;top:55px" width="19" height="18" viewBox="0 0 19 18"><path d="M2 3 H6 V16 H2 Z" fill="none" stroke="#c8c8c8" stroke-width="1.200"/><path d="M10.500 2.500 H14 L17 5.500 V16 H10.500" fill="#ececec" stroke="#c8c8c8" stroke-width="1.200"/><path d="M8.500 0.500V18" stroke="#c8c8c8" stroke-width="1" stroke-dasharray="2.500 1.200"/></svg>
<!-- Referencia a vista -->
<svg style="left:1454px;top:79px" width="19" height="18" viewBox="0 0 19 18"><rect x="1" y="5" width="2.500" height="2.500" fill="#222"/><path d="M3.500 6.200H7" stroke="#222" stroke-width="1.100"/><path d="M7 8.500 A4.500 4.500 0 1 1 15.500 8" fill="#fff" stroke="#222" stroke-width="1.200"/><path d="M10.500 4.500 L11.800 3.500 V8" fill="none" stroke="#222" stroke-width="1"/><path d="M9 12V10H11M14.500 10H16.500V12M16.500 15V17H14.500M11 17H9V15" fill="none" stroke="#1d6fc0" stroke-width="1.400"/><rect x="11.300" y="12" width="3" height="3" fill="#fff" stroke="#1d4f90" stroke-width="1.100"/></svg>
<!-- Ventanas graficas disabled -->
<svg style="left:1454px;top:104px" width="19" height="18" viewBox="0 0 19 18"><path d="M2 2.500 H12.500 L17 6 V16 H2 Z" fill="#ececec" stroke="#c8c8c8" stroke-width="1.300"/><path d="M5 8V6H7M10 6H12V8M12 11V13H10M7 13H5V11" fill="none" stroke="#d0d0d0" stroke-width="1.200"/></svg>
<svg style="left:1571px;top:110px" width="8" height="5"><path d="M0.500 0.500h6l-3 3.500z" fill="#999"/></svg>
<!-- ribbon minimize toggle -->
<svg style="left:1255px;top:33px" width="30" height="12" viewBox="0 0 30 12"><rect x="1" y="1.500" width="15" height="9" rx="2.500" fill="#fff" stroke="#333" stroke-width="1.200"/><path d="M5.500 7.500h6l-3-3.500z" fill="#333"/><path d="M20.500 5h6l-3 3.500z" fill="#333"/></svg>

<div id="props" class="abs"><span class="hd">Propiedades</span>
<svg style="left:328px;top:7px" width="11" height="11"><path d="M1 1L10 10M10 1L1 10" stroke="#222" stroke-width="1.600"/></svg>
<div style="position:absolute;left:2px;top:21px;width:338px;height:72px;border:1px solid #dadada;background:#efefef"></div>
<div style="position:absolute;left:4px;top:24px;width:66px;height:66px;border:1px solid #dcdcdc;background:#f1f1f1"></div>
<svg style="left:21px;top:42px" width="30" height="30" viewBox="0 0 32 32"><path d="M4 15 L4 26 L14 31 L28 25 L28 14" fill="#fff" stroke="#444" stroke-width="1.300"/><path d="M14 31 V18 L28 13 V25 Z" fill="#c9ccd2" stroke="#444" stroke-width="1.200"/><path d="M2 14 L20 2 L30 13 L14 19 Z" fill="#e4e6e9" stroke="#444" stroke-width="1.400" stroke-linejoin="round"/><path d="M2 14 L14 19 L30 13" fill="none" stroke="#444" stroke-width="1.400"/><path d="M7 19.500 L10.500 21 V29 L7 27.500 Z" fill="#333"/></svg>
<div style="position:absolute;left:74px;top:51px;font-size:12.200px;color:#444;letter-spacing:-0.100px">Vista 3D</div>
<svg style="left:330px;top:55px" width="9" height="6"><path d="M0.500 0.500h8l-4 4.500z" fill="#333"/></svg>
<div style="position:absolute;left:1px;top:94px;width:251px;height:22px;border:1px solid #adadad;background:#e1e1e1"></div>
<div style="position:absolute;left:5px;top:99px;font-size:12.200px;color:#111;letter-spacing:-0.150px">Vista 3D: RDI-02</div>
<svg style="left:236px;top:102px" width="11" height="7"><path d="M1 1L5.500 5.500L10 1" fill="none" stroke="#444" stroke-width="1.100"/></svg>
<svg style="left:257px;top:95px" width="18" height="18" viewBox="0 0 18 18"><rect x="1.500" y="1.500" width="5.500" height="7" fill="#fff" stroke="#333" stroke-width="1.200"/><rect x="9.500" y="1.500" width="6" height="5" fill="#fff" stroke="#333" stroke-width="1.200"/><rect x="1.500" y="11" width="5.500" height="5" fill="#fff" stroke="#333" stroke-width="1.200"/><rect x="9.500" y="8.500" width="6.500" height="8" fill="#fff" stroke="#333" stroke-width="1.200"/><rect x="11" y="10.500" width="3.500" height="2" fill="#2b63b5"/><path d="M11 14.500h3.500" stroke="#555" stroke-width="1"/></svg>
<div style="position:absolute;left:279px;top:98px;font-size:12.200px;color:#111;letter-spacing:-0.150px">Editar tipo</div>
<div style="position:absolute;left:0;top:117px;width:340px;height:669px;background:#fff"></div>
<div class="phead" style="top:118px"><span>Gráficos</span><svg style="left:327px;top:4px" width="8" height="9" viewBox="0 0 8 9"><path d="M1 4L4 1L7 4M1 8L4 5L7 8" fill="none" stroke="#111" stroke-width="1.300"/></svg></div>
<div class="prow" style="top:136px"><span class="l">Escala de vista</span><div style="position:absolute;left:166px;top:0px;width:162px;height:17px;border:1.500px solid #111;background:#fff"></div><span class="v" style="left:171px">1 : 100</span></div>
<div class="prow g" style="top:154px"><span class="l">Valor de escala&nbsp;&nbsp;&nbsp; 1:</span><span class="v">100</span></div>
<div class="prow" style="top:172px"><span class="l">Nivel de detalle</span><span class="v">Alto</span></div>
<div class="prow" style="top:190px"><span class="l">Visibilidad de piezas</span><span class="v">Mostrar original</span></div>
<div class="prow" style="top:208px"><span class="l">Modificaciones de visibilida...</span><div class="pbtn">Editar...</div></div>
<div class="prow" style="top:226px"><span class="l">Opciones de visualización d...</span><div class="pbtn">Editar...</div></div>
<div class="prow" style="top:244px"><span class="l">Disciplina</span><span class="v">Arquitectura</span></div>
<div class="prow" style="top:262px"><span class="l">Mostrar líneas ocultas</span><span class="v">Por disciplina</span></div>
<div class="prow" style="top:280px"><span class="l">Estilo por defecto de visuali...</span><span class="v">Ninguno</span></div>
<div class="prow" style="top:298px"><span class="l">Mostrar rejillas</span><div class="pbtn">Editar...</div></div>
<div class="prow" style="top:316px"><span class="l">Camino de sol</span><div class="cb"></div></div>
<div class="phead" style="top:334px"><span>Texto</span><svg style="left:327px;top:4px" width="8" height="9" viewBox="0 0 8 9"><path d="M1 4L4 1L7 4M1 8L4 5L7 8" fill="none" stroke="#111" stroke-width="1.300"/></svg></div>
<div class="prow" style="top:352px"><span class="l">Uso</span><span class="v"></span></div>
<div class="phead" style="top:370px"><span>Extensión</span><svg style="left:327px;top:4px" width="8" height="9" viewBox="0 0 8 9"><path d="M1 4L4 1L7 4M1 8L4 5L7 8" fill="none" stroke="#111" stroke-width="1.300"/></svg></div>
<div class="prow" style="top:388px"><span class="l">Recortar vista</span><div class="cb"></div></div>
<div class="prow" style="top:406px"><span class="l">Región de recorte visible</span><div class="cb"></div></div>
<div class="prow" style="top:424px"><span class="l">Recorte de anotación</span><div class="cb"></div></div>
<div class="prow" style="top:442px"><span class="l">Delimitación lejana activa</span><div class="cb"></div></div>
<div class="prow g" style="top:460px"><span class="l">Desfase de delimitación leja...</span><span class="v">30480.00</span></div>
<div class="prow" style="top:478px"><span class="l">Caja de referencia</span><span class="v">Ninguno</span></div>
<div class="prow" style="top:496px"><span class="l">Caja de sección</span><div class="cb"><svg style="left:1px;top:1px" width="10" height="10"><path d="M1.500 5L4 8L9 1.500" fill="none" stroke="#222" stroke-width="1.300"/></svg></div></div>
<div class="phead" style="top:514px"><span>Cámara</span><svg style="left:327px;top:4px" width="8" height="9" viewBox="0 0 8 9"><path d="M1 4L4 1L7 4M1 8L4 5L7 8" fill="none" stroke="#111" stroke-width="1.300"/></svg></div>
<div class="prow" style="top:532px"><span class="l">Configuración de renderiza...</span><div class="pbtn">Editar...</div></div>
<div class="prow g" style="top:550px"><span class="l">Orientación bloqueada</span><div class="cb" style="border-color:#ccc"></div></div>
<div class="prow" style="top:568px"><span class="l">Modo de proyección</span><span class="v">Ortogonal</span></div>
<div class="prow" style="top:586px"><span class="l">Altura del ojo</span><span class="v">326.66</span></div>
<div class="prow" style="top:604px"><span class="l">Altura de destino</span><span class="v">-413.55</span></div>
<div class="prow g" style="top:622px"><span class="l">Posición de cámara</span><span class="v">Ajustando</span></div>
<div class="phead" style="top:640px"><span>Datos de identidad</span><svg style="left:327px;top:4px" width="8" height="9" viewBox="0 0 8 9"><path d="M1 4L4 1L7 4M1 8L4 5L7 8" fill="none" stroke="#111" stroke-width="1.300"/></svg></div>
<div class="prow" style="top:658px"><span class="l">Plantilla de vista</span><div class="pbtn">&lt;Ninguno&gt;</div></div>
<div class="prow" style="top:676px"><span class="l">Nombre de vista</span><span class="v">RDI-02</span></div>
<div class="prow g" style="top:694px"><span class="l">Dependencia</span><span class="v">Independiente</span></div>
<div class="prow" style="top:712px"><span class="l">Título en plano</span><span class="v"></span></div>
<div class="phead" style="top:730px"><span>Proceso por fases</span><svg style="left:327px;top:4px" width="8" height="9" viewBox="0 0 8 9"><path d="M1 4L4 1L7 4M1 8L4 5L7 8" fill="none" stroke="#111" stroke-width="1.300"/></svg></div>
<div class="prow" style="top:748px"><span class="l">Filtro de fases</span><span class="v">Mostrar todo</span></div>
<div class="prow" style="top:766px"><span class="l">Fase</span><span class="v">Nueva construcción</span></div><div style="position:absolute;left:0;top:784px;width:340px;height:32px;background:#fff"></div>
<div style="position:absolute;left:330px;top:351px;width:10px;height:17px;background:#dcdcdc;border:1px solid #b5b5b5"></div>
<div style="position:absolute;left:3px;top:822px;font-size:12.200px;color:#1a5fb4;text-decoration:underline;letter-spacing:-0.100px">Ayuda de propiedades</div>
<div style="position:absolute;left:267px;top:819px;width:72px;height:21px;background:#d4d4d4;border:1px solid #c4c4c4;text-align:center;line-height:20px;font-size:12.200px;color:#8d8d8d">Aplicar</div>

</div>
<!-- view tab strips -->
<div class="abs vtabs" style="left:343px;width:1337px"></div>
<div class="abs" style="left:343px;top:193px;width:1337px;height:2px;background:#ededed"></div>
<div class="abs" style="left:473px;top:173px;width:128px;height:21px;background:#ececec"></div>
<div class="abs" style="left:1269px;top:173px;width:128px;height:22px;background:#fff"></div>
<!-- left view frame -->
<div class="abs" style="left:343px;top:195px;width:668px;height:823px;background:#f0f0f0"></div>
<div class="abs" style="left:343px;top:172px;width:2px;height:844px;background:#c8c8c8"></div><div class="abs" style="left:345px;top:195px;width:2px;height:802px;background:#f8f8f8"></div>
<div class="abs" style="left:1010px;top:195px;width:2px;height:823px;background:#c6c6c6"></div>
<svg style="left:0;top:0" width="1920" height="1038" viewBox="0 0 1920 1038">
<defs>
<clipPath id="lv"><rect x="347" y="195" width="644" height="802"/></clipPath>
<pattern id="hat" width="4.200" height="4.200" patternUnits="userSpaceOnUse" patternTransform="rotate(-45)"><rect width="4.200" height="4.200" fill="#fff"/><path d="M0 0.500h4.200" stroke="#858585" stroke-width="0.650"/></pattern>
</defs>
<g clip-path="url(#lv)">
<rect x="347" y="195" width="644" height="802" fill="#ff9709"/>
<!-- beams dark orange -->
<g fill="#ff6a12" stroke="#1a1000" stroke-width="1">
<rect x="340" y="663" width="266" height="16"/>
<path d="M1000 672 L1024 672 L856 1000 L832 1000 Z"/>
</g>
<!-- hatched walls -->
<g fill="url(#hat)" stroke="#111" stroke-width="1.100">
<rect x="484.500" y="190" width="16.500" height="141.500"/>
<rect x="756.500" y="190" width="16.500" height="145"/>
<rect x="340" y="504.500" width="160.500" height="15.500"/>
<rect x="767.500" y="504.500" width="230" height="15.500"/>

<path d="M811.500 640 L862 640 L833.500 694.500 L964 762 L1002 690 L1012 722 L970 783.500 L811.500 701.500 Z"/>

</g>
<!-- white rotated square -->
<path d="M937 672.500 L978 694.500 L956.500 735.500 L914.300 714 Z" fill="#fff" stroke="#111" stroke-width="0.900"/>
<!-- rounded rect outline -->
<g fill="none" stroke="#1a1000" stroke-width="1">
<path d="M633.500 484.500 H574 A24 24 0 0 0 549.500 509 V557.500"/>
<path d="M549.500 595 V600.500 M799.500 595V600.500"/>
<path d="M549.500 639 V689 A24 24 0 0 0 574 712.500 H632.500"/>
<path d="M671.500 484.500H677M671.500 712.500H677M742 484.500H745M742 712.500H745"/>
<path d="M714.500 484.500 H775 A24 24 0 0 1 799.500 509 V557.500"/>
<path d="M799.500 640 V690 A24 24 0 0 1 775 712.500 H714.500"/>
<path d="M799.500 598.500 H1000"/>
</g>
<!-- green pipes -->
<g fill="#14f01e" stroke="#0a3a0a" stroke-width="0.900">
<rect x="340" y="524.500" width="160" height="9.500"/>
<path d="M424 533 L431 530 L449 545.500 L443 552 Z"/>
<rect x="412.500" y="523.500" width="30" height="11.500"/>
<ellipse cx="444.500" cy="548.500" rx="4.500" ry="4"/>
<rect x="489" y="524" width="5" height="10.500"/><ellipse cx="496.500" cy="529.500" rx="4" ry="4.500"/>
<rect x="340" y="575.500" width="531" height="9"/>
<!-- branch 1 -->
<path d="M676 584 L686 581 L703 598 Q706 602 706 608 L706 622 L694.500 622 L694.500 608 Q694 604 691 601 Z"/>
<rect x="694" y="620" width="11.500" height="8" rx="2"/><ellipse cx="699.500" cy="628" rx="4.500" ry="3.500"/>
<rect x="683" y="574.500" width="5.500" height="11"/>
<!-- branch 2 -->
<path d="M752 584 L762 581 L778 596 Q781.500 599 781.500 605 L781.500 638 L770.500 638 L770.500 606 Q770 602 767 599 Z"/>
<rect x="770" y="636" width="11.500" height="8" rx="2"/><ellipse cx="775.500" cy="644" rx="4.500" ry="3.500"/>
<rect x="741.500" y="574.500" width="4.500" height="11"/><rect x="765" y="574.500" width="5.500" height="11"/>
<!-- end elbow -->
<path d="M870 575.500 L878 575.500 L906 598 L899 606 L876 584.500 L870 584.500 Z"/>
<ellipse cx="900.500" cy="602.500" rx="4.500" ry="4"/>
</g>
<!-- main beams over pipes -->
<path d="M500.500 504.500 H767.500 V520 H695.500 L501.500 898.500 L485 890 L677 520 H500.500 Z" fill="#ff6a12"/>
<path d="M500.500 504.500 H767.500 M767.500 520 H695.500 L501.500 898.500 M485 890 L677 520 H500.500 M500.500 504.500V520 M767.500 504.500V520" fill="none" stroke="#1a1000" stroke-width="1"/>
<rect x="340" y="663.500" width="263" height="15" fill="#ff6a12"/>
<g fill="url(#hat)" stroke="#111" stroke-width="1.100"><rect x="389.500" y="639.500" width="16.500" height="32"/><path d="M485 890 L501.500 898.500 L443 1010 L424.500 1006 Z"/></g>
<!-- light reference lines -->
<g stroke="#e2d3bc" stroke-width="0.900" fill="none" opacity="0.780" stroke-dasharray="100 27 23 26">
<path d="M283 268.500H991M283 314.500H991M283 456H991M283 512.500H991M283 527H991M283 591H991M283 647H991M283 671H991M283 758.500H991M283 854H991M283 930.500H991M283 994H991"/>
<path d="M397.500 66V996M492.500 66V996M764.500 242V996"/>
<path d="M347.6 292.5 L1023.3 640.5" stroke-dashoffset="33.2"/>
<path d="M347.0 450.8 L1026.8 790.7" stroke-dashoffset="108.5"/>
<path d="M347.6 646.0 L1023.3 994.0" stroke-dashoffset="18"/>
<path d="M347.0 827.9 L702.6 1011.0" stroke-dashoffset="104"/>
<path d="M423.0 441.0 L302.5 671.4" stroke-dashoffset="41.5"/>
<path d="M521.0 494.0 L326.3 866.2" stroke-dashoffset="22.3"/>
<path d="M664.0 565.0 L432.2 1008.0" stroke-dashoffset="0"/>
<path d="M708.0 590.2 L490.1 1006.7" stroke-dashoffset="21"/>
<path d="M842.6 659.2 L657.2 1013.6" stroke-dashoffset="21"/>
<path d="M996.0 690.0 L829.1 1009.0" stroke-dashoffset="60"/>
</g>
<!-- red lines -->
<g stroke="#e81010" stroke-width="0.900" fill="none">
<path d="M479 335.500 L423 441"/><path d="M577.500 387.500 L521 494"/><path d="M718.500 460 L664 565"/><path d="M762.500 486 L706 594"/><path d="M896.500 554.500 L842.500 659.500"/>
</g>
<!-- grid bubbles -->
<g fill="none" stroke="#1a1000" stroke-width="1">
<circle cx="503" cy="288" r="51.500"/><circle cx="601.500" cy="340" r="52"/><circle cx="743" cy="413" r="51.500"/><circle cx="789.200" cy="437" r="51"/><circle cx="922" cy="507" r="51.500"/>
</g>
<circle cx="972" cy="598" r="50.500" fill="none" stroke="#5d5d7a" stroke-width="1"/>
<g fill="#fff">
<rect x="484.500" y="265" width="41.500" height="51"/><rect x="583" y="316" width="42" height="51"/><rect x="724.500" y="390" width="41" height="51"/><rect x="765.500" y="411" width="42.500" height="51"/><rect x="899" y="481" width="42" height="51"/>
<rect x="964" y="561" width="9.500" height="31"/><rect x="955" y="603.500" width="27.500" height="30.500"/>
</g>
<clipPath id="l4"><rect x="765.500" y="411" width="42.500" height="51"/></clipPath><circle cx="743" cy="413" r="51.500" fill="none" stroke="#1a1000" stroke-width="1" clip-path="url(#l4)"/>
<path d="M965.500 578.500h7M956.500 620h7M965.500 620h7M974.500 620h7" stroke="#1038c8" stroke-width="2"/>
<g font-family="Liberation Sans, sans-serif" font-style="italic" font-size="45" fill="#000" stroke="#000" stroke-width="0.600">
<text x="486" y="304">7</text><text x="584" y="355">6</text><text x="725" y="429">5</text><text x="767" y="450">4</text><text x="900" y="520">3</text>
</g>
<g stroke="#000" stroke-width="2.400" fill="none"><path d="M524.500 274.500L517.500 284.500M623 325.500L616 335.500M764.500 399.500L757.500 409.500M805.500 420.500L798.500 430.500M939 490.500L932 500.500"/></g>
<!-- crosshair -->
<path d="M946 498.500H963M954.500 490.500V507" stroke="#1a1000" stroke-width="1"/><circle cx="954.500" cy="498.500" r="3" fill="none" stroke="#4a7a10" stroke-width="1"/>
</g>
</svg>
<!-- nav bar left view -->
<div class="abs" style="left:956px;top:196px;width:35px;height:116px;background:rgba(250,190,110,0.720);border:1.500px solid #c47a14;border-radius:5px"></div>
<svg style="left:956px;top:198px" width="35" height="116" viewBox="0 0 35 116">
<circle cx="27" cy="6.500" r="3" fill="#f6d8b0" stroke="#a87a40" stroke-width="1"/><path d="M25.500 5l3 3M28.500 5l-3 3" stroke="#a87a40" stroke-width="0.800"/>
<path d="M6 32 Q4 18 18 18 Q23 18 23 24 V33 Q22 41 13 40 Q7 39 6 32Z" fill="#f6d6b0" stroke="#a8906a" stroke-width="1.300"/><circle cx="14" cy="28" r="4.500" fill="none" stroke="#a8906a" stroke-width="1.200"/>
<text x="17" y="41" font-family="Liberation Sans, sans-serif" font-size="8.500" font-weight="bold" fill="#a8906a">2D</text>
<path d="M13 48h5l-2.500 3z" fill="#a8804a"/><path d="M4 55.500h26" stroke="#c49a5a" stroke-width="1"/>
<rect x="9" y="64" width="10" height="10" fill="#b5bd6a" stroke="#9aa050" stroke-width="0.800"/><circle cx="20" cy="74" r="3" fill="#f3dcc0" stroke="#a8906a" stroke-width="1"/><path d="M22 76.500l3 3" stroke="#a8906a" stroke-width="1.300"/>
<path d="M13 90h5l-2.500 3z" fill="#a8804a"/>
<circle cx="27" cy="106.500" r="3" fill="#f6d8b0" stroke="#a87a40" stroke-width="1"/><path d="M25.500 106h3l-1.500 1.800z" fill="#a87a40"/>
</svg>
<!-- left view scrollbars -->
<svg style="left:993px;top:199px" width="14" height="8"><path d="M2 6.500L6.500 2L11 6.500" fill="none" stroke="#333" stroke-width="1.800"/></svg>
<svg style="left:993px;top:985px" width="14" height="8"><path d="M2 1.500L6.500 6L11 1.500" fill="none" stroke="#333" stroke-width="1.800"/></svg>
<div class="abs" style="left:992px;top:588px;width:15px;height:17px;background:#cdcdcd"></div>
<div class="abs" style="left:816px;top:997px;width:17px;height:17px;background:#cdcdcd"></div>
<svg style="left:659px;top:1000px" width="8" height="11"><path d="M6.500 1L2 5.500L6.500 10" fill="none" stroke="#333" stroke-width="1.800"/></svg>
<svg style="left:978px;top:1000px" width="8" height="11"><path d="M1.500 1L6 5.500L1.500 10" fill="none" stroke="#333" stroke-width="1.800"/></svg>
<div class="abs" style="left:371px;top:999px;font-size:12px;color:#111;letter-spacing:-0.500px">1 : 100</div>
<svg style="left:425px;top:997px" width="232" height="18" viewBox="0 0 232 18">
<defs><pattern id="chk" width="3" height="3" patternUnits="userSpaceOnUse"><rect width="3" height="3" fill="#fff"/><rect width="1.500" height="1.500" fill="#555"/><rect x="1.500" y="1.500" width="1.500" height="1.500" fill="#555"/></pattern></defs>
<rect x="1.500" y="1.500" width="15" height="10.500" fill="url(#chk)" stroke="#333" stroke-width="1.100"/>
<path d="M24 7.500 L28 3.500 H38 V9.500 L34 13.500 H24 Z M24 7.500 H34 V13.500 M34 7.500 L38 3.500" fill="#f2f2f2" stroke="#333" stroke-width="1.100" stroke-linejoin="round"/>
<circle cx="47" cy="6.500" r="3.200" fill="#ffd84a" stroke="#c89a00" stroke-width="0.900"/><path d="M47 1v1.500M47 10.500V12M41.500 6.500H43M42.800 2.500l1.200 1.200M51.200 2.500L50 3.700M42.800 10.500L44 9.300" stroke="#c89a00" stroke-width="1"/><path d="M50.500 8.500l5 5M55.500 8.500l-5 5" stroke="#e0202a" stroke-width="2"/>
<circle cx="70.500" cy="6" r="3.800" fill="#eaf2ff" stroke="#2a6ac0" stroke-width="1.100"/><path d="M66 11.500h8M67 13.500h6" stroke="#2a6ac0" stroke-width="1"/><path d="M73.500 8.500l5 5M78.500 8.500l-5 5" stroke="#e0202a" stroke-width="2"/>
<path d="M87 13.500V5.500H99M84 9.500h6M93 2.500v5" fill="none" stroke="#2a6ac0" stroke-width="1.200"/><path d="M90 7.500h8v6h-8z" fill="#fff" stroke="#2a6ac0" stroke-width="0.900"/><path d="M94 7.500l5.500 5.500M99.500 7.500L94 13" stroke="#e0202a" stroke-width="2"/>
<path d="M108 13.500V5.500H119M105 9.500h6M114 2.500v5" fill="none" stroke="#2a6ac0" stroke-width="1.200"/><path d="M111 7.500h5v6h-5z" fill="#fff" stroke="#2a6ac0" stroke-width="0.900"/><circle cx="119" cy="8" r="2.800" fill="#eaf2ff" stroke="#2a6ac0" stroke-width="1"/><path d="M118 11h2v2.500h-2z" fill="#2a6ac0"/>
<path d="M126 5.500 Q128 3 130 5.500 L133 9.500 M142 5 L137.500 9" fill="none" stroke="#333" stroke-width="1.100"/><ellipse cx="135" cy="11" rx="3" ry="2.500" fill="#f4f4f4" stroke="#333" stroke-width="1.100"/><ellipse cx="140.500" cy="8.500" rx="2.500" ry="2.200" fill="#f4f4f4" stroke="#333" stroke-width="1.100"/>
<circle cx="154" cy="7" r="2.800" fill="#eaf4ff" stroke="#2a7ad0" stroke-width="1.100"/><path d="M153 10h2v2.500h-2z" fill="#2a7ad0"/>
<path d="M170 4.500h12v9h-12z" fill="none" stroke="#222" stroke-width="1.400" stroke-dasharray="4 2"/><rect x="177" y="8" width="6.500" height="5.500" fill="#fff" stroke="#222" stroke-width="1.100"/><circle cx="180.200" cy="10.800" r="1.300" fill="none" stroke="#222" stroke-width="0.900"/>
<path d="M189 13.500V7L193 3.500L197 7V13.500M193 3.500L201 4.500L205 8V13.500" fill="none" stroke="#444" stroke-width="1.100"/><path d="M190.500 8v5.500M193 8v5.500M195.500 8v5.500" stroke="#d03030" stroke-width="1"/><path d="M199 8v5.500M201.500 8v5.500" stroke="#3060c0" stroke-width="1"/><circle cx="203.500" cy="7.500" r="2.800" fill="#ffd060" stroke="#d09a20" stroke-width="0.800"/>
<path d="M211 1v5M226 1v5M211 3.500h15" fill="none" stroke="#333" stroke-width="1.100"/><path d="M211 8v5.500M213 11h6" stroke="#555" stroke-width="1" stroke-dasharray="1.500 1.200"/><rect x="219.500" y="9" width="7" height="5" fill="#bbb" stroke="#444" stroke-width="1"/><path d="M221 9V7.500a2 2 0 0 1 4 0V9" fill="none" stroke="#444" stroke-width="1"/>
</svg>
<!-- left tabs -->
<svg style="left:351px;top:175px" width="18" height="17" viewBox="0 0 18 17"><path d="M1.500 2.500H8V14.500H1.500Z" fill="#e4e4e4" stroke="#8a8a8a" stroke-width="1"/><path d="M6.500 4.500H14L16.500 7V15.500H6.500Z" fill="#e4e4e4" stroke="#8a8a8a" stroke-width="1"/><path d="M8 7.500h5M10.500 5v5" stroke="#8a8a8a" stroke-width="0.900" stroke-dasharray="1.500 1"/></svg>
<div class="vtab abs" style="left:373px;top:177px">Fundaciones</div>
<svg style="left:478px;top:175px" width="18" height="17" viewBox="0 0 18 17"><path d="M1.500 1.500H11V12.500H1.500Z" fill="#ececec" stroke="#8a8a8a" stroke-width="1"/><path d="M4.500 1.500v11M8 1.500v11M1.500 5h9.500M1.500 8.500h9.500" stroke="#9a9a9a" stroke-width="0.800"/><path d="M7.500 6.500H16.500V15.500H7.500Z" fill="#ececec" stroke="#8a8a8a" stroke-width="1"/><path d="M10.500 6.500v9M13.500 6.500v9M7.500 9.500h9M7.500 12.500h9" stroke="#9a9a9a" stroke-width="0.800"/></svg>
<div class="vtab abs" style="left:501px;top:177px">Sub 2</div>
<svg style="left:994px;top:179px" width="11" height="9"><path d="M0.500 1h9.500" stroke="#333" stroke-width="1.400"/><path d="M1 3.500h8.500l-4.200 4.500z" fill="#333"/></svg>
<!-- right tabs -->
<svg style="left:1016px;top:175px" width="17" height="16" viewBox="0 0 18 16"><path d="M2.500 7.500 V12.500 L7.500 15 L15.500 12 V6.500" fill="#f2f2f2" stroke="#8a8a8a" stroke-width="1.100"/><path d="M7.500 15 V9 L15.500 6.500 V12 Z" fill="#c8cbd0" stroke="#8a8a8a" stroke-width="1"/><path d="M1 7 L10.500 1 L17 6.500 L7.500 9.500 Z" fill="#eee" stroke="#8a8a8a" stroke-width="1.200" stroke-linejoin="round"/></svg>
<div class="vtab abs" style="left:1040px;top:177px">Fundaciones</div>
<svg style="left:1144px;top:175px" width="17" height="16" viewBox="0 0 18 16"><path d="M2.500 7.500 V12.500 L7.500 15 L15.500 12 V6.500" fill="#f2f2f2" stroke="#8a8a8a" stroke-width="1.100"/><path d="M7.500 15 V9 L15.500 6.500 V12 Z" fill="#c8cbd0" stroke="#8a8a8a" stroke-width="1"/><path d="M1 7 L10.500 1 L17 6.500 L7.500 9.500 Z" fill="#eee" stroke="#8a8a8a" stroke-width="1.200" stroke-linejoin="round"/></svg>
<div class="vtab abs" style="left:1168px;top:177px">Sub 2</div>
<svg style="left:1272px;top:175px" width="17" height="16" viewBox="0 0 18 16"><path d="M2.500 7.500 V12.500 L7.500 15 L15.500 12 V6.500" fill="#fff" stroke="#333" stroke-width="1.100"/><path d="M7.500 15 V9 L15.500 6.500 V12 Z" fill="#c8cbd0" stroke="#333" stroke-width="1"/><path d="M1 7 L10.500 1 L17 6.500 L7.500 9.500 Z" fill="#eee" stroke="#333" stroke-width="1.200" stroke-linejoin="round"/><path d="M4 10 L6 11 V14.200 L4 13.200Z" fill="#333"/></svg>
<div class="vtab abs" style="left:1296px;top:177px;font-weight:bold;color:#222;letter-spacing:0.100px">RDI-02</div>
<svg style="left:1380px;top:178px" width="12" height="12"><path d="M1.500 1.500L10.500 10.500M10.500 1.500L1.500 10.500" stroke="#222" stroke-width="1.800"/></svg>
<svg style="left:1661px;top:179px" width="11" height="9"><path d="M0.500 1h9.500" stroke="#333" stroke-width="1.400"/><path d="M1 3.500h8.500l-4.200 4.500z" fill="#333"/></svg>


<!-- right view frame -->
<div class="abs" style="left:1012px;top:195px;width:668px;height:821px;background:#f0f0f0"></div>
<div class="abs" style="left:1013px;top:196px;width:646px;height:800px;background:#fff"></div>
<div class="abs" style="left:1677px;top:172px;width:3px;height:844px;background:#d2d2d2"></div>
<svg style="left:0;top:0" width="1920" height="1038" viewBox="0 0 1920 1038">
<defs>
<linearGradient id="flo" x1="0" y1="0" x2="0" y2="1"><stop offset="0" stop-color="#ef8f04"/><stop offset="1" stop-color="#ff9a0a"/></linearGradient>
<pattern id="hat2" width="4.500" height="4.500" patternUnits="userSpaceOnUse" patternTransform="rotate(-62)"><rect width="4.500" height="4.500" fill="#fff"/><path d="M0 0.500h4.500" stroke="#a5a5a5" stroke-width="0.700"/></pattern><pattern id="hat3" width="4.500" height="4.500" patternUnits="userSpaceOnUse" patternTransform="rotate(-30)"><rect width="4.500" height="4.500" fill="#fff"/><path d="M0 0.500h4.500" stroke="#a5a5a5" stroke-width="0.700"/></pattern>
</defs>
<!-- floor -->
<path d="M1124.700 867.500 L1365.400 729.200 L1556.200 837.400 L1314.400 977.500 Z" fill="url(#flo)" stroke="#111" stroke-width="1"/>
<!-- upper pipe (behind slab line) -->
<path d="M1243 541.900 A6.800 6.800 0 0 1 1251.600 527.400 L1310.400 560.200 L1287.300 566 Z" fill="#12ee14" stroke="#0a8a10" stroke-width="0.600"/>
<!-- upper beam face -->
<path d="M1316.800 482.100 L1422.300 542.800 L1368.800 551.500 L1316.800 519.700 Z" fill="#ea5a05"/>
<!-- main beam faces -->
<path d="M1151.400 607.900 L1443.900 555.300 L1443.900 594.900 L1151.400 646.900 Z" fill="#ff6405" stroke="#111" stroke-width="0.800"/>
<path d="M1443.900 555.300 L1507.500 590.500 L1507.500 629.500 L1443.900 594.900 Z" fill="#f86005" stroke="#111" stroke-width="0.800"/>
<path d="M1507.500 590.500 L1526.300 580.400 L1526.300 619.400 L1507.500 629.500 Z" fill="url(#hat2)" stroke="#111" stroke-width="0.800"/>
<path d="M1124.600 593.400 L1151.400 607.900 L1151.400 646.900 L1130.300 635.300 L1130.300 623.500 L1124.600 621.400 Z" fill="url(#hat3)" stroke="#111" stroke-width="0.800"/>
<!-- slab/wall top outlines -->
<g fill="none" stroke="#111" stroke-width="0.900">
<path d="M1316.800 519.700 V482.100 L1337 470.600 L1526.300 580.400"/>
<path d="M1124.600 593.400 L1134.700 587 L1143.400 583.300 L1157.800 590.500 L1368.800 551.500 L1422.300 542.800"/>

</g>
<!-- P-trap and lower pipe -->
<g fill="#12ee14" stroke="#0a5a0a" stroke-width="0.800" stroke-linejoin="round">
<path d="M1345 582.300 L1364.200 591.800 L1437.300 632.100 L1427.800 648 L1353.600 604.500 L1346 600 Z"/>
<path d="M1326 589.700 L1325 584.400 Q1327 578 1332.400 577.500 L1337.700 577 Q1345 581 1347.200 586.500 L1349.400 595 L1350.400 625.700 Q1350 633 1345.100 636.300 Q1338 642 1332.400 644.800 Q1326 647.500 1321.800 647.400 Q1316 647 1313.300 643.700 Q1309.500 640 1309.100 627.800 L1311 622.500 L1311.500 629.500 Q1318 633 1325 629.500 L1325.500 625.700 Q1329 626 1330.300 624.700 Q1333.500 623 1333.500 620.400 L1333.500 602.400 Q1333 596 1331.300 593.900 Z"/>
<path d="M1334 598 Q1341 592 1349 596.500 M1334 602 Q1341 596.500 1349.500 600.500 M1334 614 Q1342 610 1350 615 M1330 625 Q1336 630 1338 640 M1332 624.500 Q1338 629 1340.500 638.500 M1356.800 590.700 Q1352 596 1352.500 604 M1363 593 Q1358 598 1358 607 M1424 626 Q1419.500 631 1421 642 M1431 629.500 Q1426.500 634 1427 645" fill="none" stroke="#083a08" stroke-width="0.700"/>
</g>
<path d="M1311.200 622.500 L1311.500 629.500 Q1318 633 1325 629.500 L1325 622.500 Z" fill="#12ee14" stroke="#0a5a0a" stroke-width="0.600"/><ellipse cx="1318.100" cy="622.500" rx="6.900" ry="3.900" fill="#fff" stroke="#111" stroke-width="0.800"/><circle cx="1318.300" cy="622.600" r="0.600" fill="#111"/>
<path d="M1311.800 630.500 Q1318 633.500 1324.500 630.500" fill="none" stroke="#083a08" stroke-width="1.200"/>
<ellipse cx="1434.700" cy="640" rx="5.600" ry="8.300" fill="#fff" stroke="#111" stroke-width="0.900" transform="rotate(28 1434.700 640)"/><circle cx="1434.500" cy="640.300" r="0.600" fill="#111"/>
<path d="M1331 571 L1336 575.500 M1322.500 588 L1326 590" stroke="#111" stroke-width="0.700"/>
<!-- section box wireframe -->
<g fill="none" stroke="#111" stroke-width="1">
<path d="M1124.600 581.800 L1365.300 442.500 L1556.600 552.400 L1314.500 690.200 Z"/>
<path d="M1124.600 581.800 V867.500 M1314.500 690.200 V977.500 M1556.600 552.400 V837.400 M1365.300 442.500 V729.200"/>
</g>
<!-- mouse cursor -->
<path d="M1503.500 670.500 L1503.500 685.500 L1507 682.500 L1509.500 688.500 L1512 687.500 L1509.500 681.500 L1514 681.500 Z" fill="#fff" stroke="#111" stroke-width="1"/>
<!-- view cube -->
<ellipse cx="1576.600" cy="302.300" rx="58" ry="36" fill="#f1f1f1" stroke="#c9c9c9" stroke-width="1" stroke-dasharray="1.500 1.500"/>
<ellipse cx="1576.600" cy="300" rx="45" ry="27" fill="#fdfdfd" stroke="#d4d4d4" stroke-width="1" stroke-dasharray="1.500 1.500"/>
<ellipse cx="1577" cy="306" rx="30" ry="14" fill="#e6e6e6" opacity="0.700"/>
<path d="M1544.600 258.400 L1576.600 242.500 L1607.700 258.400 L1576.600 275.800 Z" fill="#eceef0" stroke="#8f8f8f" stroke-width="0.900"/>
<path d="M1544.600 258.400 L1576.600 275.800 L1576.600 312.700 L1547 293.900 Z" fill="#e3e5e8" stroke="#8f8f8f" stroke-width="0.900"/>
<path d="M1607.700 258.400 L1576.600 275.800 L1576.600 312.700 L1606 295 Z" fill="#d9dcdf" stroke="#8f8f8f" stroke-width="0.900"/>
<g font-family="Liberation Sans, sans-serif" font-size="7.500" font-weight="bold" fill="#7a7a7a">
<text transform="translate(1561 252) rotate(27) skewX(-30)">SUPERIOR</text>
<text transform="translate(1548 274) rotate(30) skewX(0) scale(0.800 1.300)">FRONTAL</text>
<text transform="translate(1580 297) rotate(-30) scale(0.800 1.300)">DERECHA</text>
</g>
<g font-family="Liberation Sans, sans-serif" font-size="11" font-weight="bold" fill="#e2e2e2" stroke="#bdbdbd" stroke-width="0.600"><text x="1526" y="328">S</text><text x="1612" y="330" font-size="9">E</text><text x="1536" y="281" font-size="8">O</text><text x="1606" y="280" font-size="8">N</text></g>
</svg>
<!-- nav bar right -->
<div class="abs" style="left:1622px;top:350px;width:36px;height:117px;background:#f3f3f3;border:1.500px solid #b5b5b5;border-radius:5px"></div>
<svg style="left:1622px;top:350px" width="36" height="117" viewBox="0 0 36 117">
<circle cx="27.500" cy="7.500" r="3.200" fill="#e2e2e2" stroke="#9a9a9a" stroke-width="1"/><path d="M26 6l3 3M29 6l-3 3" stroke="#8a8a8a" stroke-width="0.800"/>
<path d="M7 32 Q7 21 18 21 H27 V32 Q27 43 17 43 Q7 43 7 32Z" fill="#f0f0f0" stroke="#8f8f8f" stroke-width="1.300"/><circle cx="17" cy="32" r="6" fill="#fafafa" stroke="#8f8f8f" stroke-width="1.200"/><path d="M12.500 36.500l-3 3M21.500 36.500l3 3" stroke="#8f8f8f" stroke-width="1"/>
<path d="M14.500 50.500h5l-2.500 3z" fill="#7a7a7a"/><path d="M4 58.500h28" stroke="#c4c4c4" stroke-width="1"/>
<rect x="10" y="67" width="10.500" height="10.500" fill="#a9cf8e" stroke="#8fb377" stroke-width="0.800"/><circle cx="21" cy="77.500" r="3.200" fill="#f4f4f4" stroke="#8f8f8f" stroke-width="1"/><path d="M23 80l3 3" stroke="#8f8f8f" stroke-width="1.400"/>
<path d="M14.500 92.500h5l-2.500 3z" fill="#7a7a7a"/>
<circle cx="27.500" cy="109" r="3.200" fill="#e2e2e2" stroke="#9a9a9a" stroke-width="1"/><path d="M25.800 108h3.400M25.800 110h3.400" stroke="#8a8a8a" stroke-width="0.800"/>
</svg>
<!-- right view scrollbars and bottom bar -->
<svg style="left:1661px;top:199px" width="14" height="8"><path d="M2 6.500L6.500 2L11 6.500" fill="none" stroke="#333" stroke-width="1.800"/></svg>
<svg style="left:1661px;top:985px" width="14" height="8"><path d="M2 1.500L6.500 6L11 1.500" fill="none" stroke="#333" stroke-width="1.800"/></svg>
<div class="abs" style="left:1660px;top:588px;width:15px;height:17px;background:#cdcdcd"></div>
<div class="abs" style="left:1513px;top:997px;width:17px;height:17px;background:#cdcdcd"></div>
<svg style="left:1389px;top:1000px" width="8" height="11"><path d="M6.500 1L2 5.500L6.500 10" fill="none" stroke="#333" stroke-width="1.800"/></svg>
<svg style="left:1646px;top:1000px" width="8" height="11"><path d="M1.500 1L6 5.500L1.500 10" fill="none" stroke="#333" stroke-width="1.800"/></svg>
<div class="abs" style="left:1038px;top:999px;font-size:12px;color:#111;letter-spacing:-0.500px">1 : 100</div>
<svg style="left:1092px;top:997px" width="292" height="18" viewBox="0 0 292 18">
<rect x="1.500" y="1.500" width="15" height="10.500" fill="url(#chk)" stroke="#333" stroke-width="1.100"/>
<path d="M24 7.500 L28 3.500 H38 V9.500 L34 13.500 H24 Z M24 7.500 H34 V13.500 M34 7.500 L38 3.500" fill="#f2f2f2" stroke="#333" stroke-width="1.100" stroke-linejoin="round"/>
<circle cx="48" cy="6.500" r="3.200" fill="#ffd84a" stroke="#c89a00" stroke-width="0.900"/><path d="M48 1v1.500M48 10.500V12M42.500 6.500H44M43.800 2.500l1.200 1.200M52.200 2.500L51 3.700M43.800 10.500L45 9.300" stroke="#c89a00" stroke-width="1"/><path d="M51.500 8.500l5 5M56.500 8.500l-5 5" stroke="#e0202a" stroke-width="2"/>
<circle cx="70.500" cy="6" r="3.800" fill="#eaf2ff" stroke="#2a6ac0" stroke-width="1.100"/><path d="M66 11.500h8M67 13.500h6" stroke="#2a6ac0" stroke-width="1"/><path d="M73.500 8.500l5 5M78.500 8.500l-5 5" stroke="#e0202a" stroke-width="2"/>
<path d="M86 5.500h9l-1.500 6h-6z M85 6l-2.500-1.500 2 4.500" fill="#eee" stroke="#555" stroke-width="1"/><circle cx="97" cy="8" r="2.800" fill="#eaf2ff" stroke="#2a6ac0" stroke-width="1"/><path d="M96 11h2v2.500h-2z" fill="#2a6ac0"/>
<path d="M108 13.500V5.500H120M105 9.500h6M114 2.500v5" fill="none" stroke="#2a6ac0" stroke-width="1.200"/><path d="M111 7.500h8v6h-8z" fill="#fff" stroke="#2a6ac0" stroke-width="0.900"/><path d="M115 7.500l5.500 5.500M120.500 7.500L115 13" stroke="#e0202a" stroke-width="2"/>
<path d="M129 13.500V5.500H140M126 9.500h6M135 2.500v5" fill="none" stroke="#2a6ac0" stroke-width="1.200"/><path d="M132 7.500h5v6h-5z" fill="#fff" stroke="#2a6ac0" stroke-width="0.900"/><circle cx="140" cy="8" r="2.800" fill="#eaf2ff" stroke="#2a6ac0" stroke-width="1"/><path d="M139 11h2v2.500h-2z" fill="#2a6ac0"/>
<path d="M148 7.500L155 2.500L162 7.500M149.500 7V13.500h5M153 13V9h3" fill="none" stroke="#333" stroke-width="1.200"/><rect x="156" y="9.500" width="6" height="4.500" fill="#fff" stroke="#2a8a5a" stroke-width="1.100"/><path d="M157.500 9.500V8a1.500 1.500 0 0 1 3 0v1.500" fill="none" stroke="#2a8a5a" stroke-width="1"/>
<path d="M169 5.500 Q171 3 173 5.500 L176 9.500 M185 5 L180.500 9" fill="none" stroke="#333" stroke-width="1.100"/><ellipse cx="178" cy="11" rx="3" ry="2.500" fill="#f4f4f4" stroke="#333" stroke-width="1.100"/><ellipse cx="183.500" cy="8.500" rx="2.500" ry="2.200" fill="#f4f4f4" stroke="#333" stroke-width="1.100"/>
<circle cx="196" cy="7" r="2.800" fill="#eaf4ff" stroke="#2a7ad0" stroke-width="1.100"/><path d="M195 10h2v2.500h-2z" fill="#2a7ad0"/>
<path d="M211 4.500h12v9h-12z" fill="none" stroke="#222" stroke-width="1.400" stroke-dasharray="4 2"/><rect x="218" y="8" width="6.500" height="5.500" fill="#fff" stroke="#222" stroke-width="1.100"/><circle cx="221.200" cy="10.800" r="1.300" fill="none" stroke="#222" stroke-width="0.900"/>
<path d="M231 13.500V7L235 3.500L239 7V13.500M235 3.500L243 4.500L247 8V13.500" fill="none" stroke="#444" stroke-width="1.100"/><path d="M232.500 8v5.500M235 8v5.500M237.500 8v5.500" stroke="#d03030" stroke-width="1"/><path d="M241 8v5.500M243.500 8v5.500" stroke="#3060c0" stroke-width="1"/><circle cx="245.500" cy="7.500" r="2.800" fill="#ffd060" stroke="#d09a20" stroke-width="0.800"/>
<path d="M254 7.500 L258 3.500 H268 V9.500 L264 13.500 H254 Z M254 7.500 H264 V13.500 M264 7.500 L268 3.500 M257 13.500V7.500 M260.500 13.500V7.500" fill="#ddd" stroke="#666" stroke-width="1" stroke-linejoin="round"/>
<path d="M273 1v5M288 1v5M273 3.500h15" fill="none" stroke="#333" stroke-width="1.100"/><path d="M273 8v5.500M275 11h6" stroke="#555" stroke-width="1" stroke-dasharray="1.500 1.200"/><rect x="281.500" y="9" width="7" height="5" fill="#bbb" stroke="#444" stroke-width="1"/><path d="M283 9V7.500a2 2 0 0 1 4 0V9" fill="none" stroke="#444" stroke-width="1"/>
</svg>


<div id="browser" class="abs">
<div style="position:absolute;left:0;top:0;width:240px;height:22px;background:#efefef"></div>
<div style="position:absolute;left:3px;top:5px;font-size:12.200px;color:#333;letter-spacing:-0.100px;white-space:nowrap">Navegador de proyectos - IBIM-COOR...</div>
<svg style="left:227px;top:7px" width="11" height="11"><path d="M1 1L10 10M10 1L1 10" stroke="#222" stroke-width="1.600"/></svg>
<div style="position:absolute;left:9.0px;top:35px;width:0;height:571px;border-left:1px dotted #9a9a9a"></div>
<div style="position:absolute;left:13.0px;top:30px;width:7.0px;height:0;border-top:1px dotted #9a9a9a"></div>
<svg style="left:4.5px;top:25.5px;z-index:3" width="9" height="9"><rect x="0.500" y="0.500" width="8" height="8" fill="#fff" stroke="#8a8a8a" stroke-width="1"/><path d="M2 4.500h5" stroke="#333" stroke-width="1"/></svg>
<svg style="left:21.5px;top:22px" width="16" height="16" viewBox="0 0 16 16"><path d="M1.500 5V1.500H5M11 1.500H14.500V5M14.500 11V14.500H11M5 14.500H1.500V11" fill="none" stroke="#333" stroke-width="1.200"/><rect x="4.500" y="4.500" width="7" height="7" rx="2" fill="#eee" stroke="#444" stroke-width="1.100"/></svg>
<div class="tn" style="left:42.6px;top:22px">Vistas (todo)</div>
<div style="position:absolute;left:34.0px;top:48px;width:10.0px;height:0;border-top:1px dotted #9a9a9a"></div>
<svg style="left:25.0px;top:43.5px;z-index:3" width="9" height="9"><rect x="0.500" y="0.500" width="8" height="8" fill="#fff" stroke="#8a8a8a" stroke-width="1"/><path d="M2 4.500h5" stroke="#333" stroke-width="1"/></svg>
<div class="tn" style="left:47px;top:40px">Planos de planta</div>
<div style="position:absolute;left:49.0px;top:66px;width:14.0px;height:0;border-top:1px dotted #9a9a9a"></div>
<div class="tn" style="left:67px;top:58px">Cubierta</div>
<div style="position:absolute;left:49.0px;top:84px;width:14.0px;height:0;border-top:1px dotted #9a9a9a"></div>
<div class="tn" style="left:67px;top:76px">Fundaciones</div>
<div style="position:absolute;left:49.0px;top:102px;width:14.0px;height:0;border-top:1px dotted #9a9a9a"></div>
<div class="tn" style="left:67px;top:94px">Piso 1</div>
<div style="position:absolute;left:49.0px;top:120px;width:14.0px;height:0;border-top:1px dotted #9a9a9a"></div>
<div class="tn" style="left:67px;top:112px">Piso 2</div>
<div style="position:absolute;left:49.0px;top:138px;width:14.0px;height:0;border-top:1px dotted #9a9a9a"></div>
<div class="tn" style="left:67px;top:130px">Piso 3</div>
<div style="position:absolute;left:49.0px;top:156px;width:14.0px;height:0;border-top:1px dotted #9a9a9a"></div>
<div class="tn" style="left:67px;top:148px">Piso 4</div>
<div style="position:absolute;left:49.0px;top:174px;width:14.0px;height:0;border-top:1px dotted #9a9a9a"></div>
<div class="tn" style="left:67px;top:166px">RDI-01</div>
<div style="position:absolute;left:49.0px;top:192px;width:14.0px;height:0;border-top:1px dotted #9a9a9a"></div>
<div class="tn" style="left:67px;top:184px">Sub 1</div>
<div style="position:absolute;left:49.0px;top:210px;width:14.0px;height:0;border-top:1px dotted #9a9a9a"></div>
<div class="tn" style="left:67px;top:202px">Sub 2</div>
<div style="position:absolute;left:34.0px;top:228px;width:10.0px;height:0;border-top:1px dotted #9a9a9a"></div>
<svg style="left:25.0px;top:223.5px;z-index:3" width="9" height="9"><rect x="0.500" y="0.500" width="8" height="8" fill="#fff" stroke="#8a8a8a" stroke-width="1"/><path d="M2 4.500h5" stroke="#333" stroke-width="1"/></svg>
<div class="tn" style="left:47px;top:220px">Planos de techo</div>
<div style="position:absolute;left:49.0px;top:246px;width:14.0px;height:0;border-top:1px dotted #9a9a9a"></div>
<div class="tn" style="left:67px;top:238px">RDI-02</div>
<div style="position:absolute;left:49.0px;top:264px;width:14.0px;height:0;border-top:1px dotted #9a9a9a"></div>
<div class="tn" style="left:67px;top:256px">Sub 1</div>
<div style="position:absolute;left:49.0px;top:282px;width:14.0px;height:0;border-top:1px dotted #9a9a9a"></div>
<div class="tn" style="left:67px;top:274px">Sub 2</div>
<div style="position:absolute;left:34.0px;top:300px;width:10.0px;height:0;border-top:1px dotted #9a9a9a"></div>
<svg style="left:25.0px;top:295.5px;z-index:3" width="9" height="9"><rect x="0.500" y="0.500" width="8" height="8" fill="#fff" stroke="#8a8a8a" stroke-width="1"/><path d="M2 4.500h5" stroke="#333" stroke-width="1"/></svg>
<div class="tn" style="left:47px;top:292px">Vistas 3D</div>
<div style="position:absolute;left:49.0px;top:318px;width:14.0px;height:0;border-top:1px dotted #9a9a9a"></div>
<div class="tn" style="left:67px;top:310px">Fundaciones</div>
<div style="position:absolute;left:49.0px;top:336px;width:14.0px;height:0;border-top:1px dotted #9a9a9a"></div>
<div class="tn" style="left:67px;top:328px">RDI-01</div>
<div style="position:absolute;left:49.0px;top:354px;width:14.0px;height:0;border-top:1px dotted #9a9a9a"></div>
<div style="position:absolute;left:64px;top:345px;width:46px;height:18px;background:#e5e5e5"></div>
<div class="tn" style="left:67px;top:346px;font-weight:bold;letter-spacing:0">RDI-02</div>
<div style="position:absolute;left:49.0px;top:372px;width:14.0px;height:0;border-top:1px dotted #9a9a9a"></div>
<div class="tn" style="left:67px;top:364px">Sub 1</div>
<div style="position:absolute;left:49.0px;top:390px;width:14.0px;height:0;border-top:1px dotted #9a9a9a"></div>
<div class="tn" style="left:67px;top:382px">Sub 2</div>
<div style="position:absolute;left:49.0px;top:408px;width:14.0px;height:0;border-top:1px dotted #9a9a9a"></div>
<div class="tn" style="left:67px;top:400px">{3D}</div>
<div style="position:absolute;left:34.0px;top:426px;width:10.0px;height:0;border-top:1px dotted #9a9a9a"></div>
<svg style="left:25.0px;top:421.5px;z-index:3" width="9" height="9"><rect x="0.500" y="0.500" width="8" height="8" fill="#fff" stroke="#8a8a8a" stroke-width="1"/><path d="M2 4.500h5" stroke="#333" stroke-width="1"/></svg>
<div class="tn" style="left:47px;top:418px">Alzados (Alzado 1)</div>
<div style="position:absolute;left:49.0px;top:444px;width:14.0px;height:0;border-top:1px dotted #9a9a9a"></div>
<div class="tn" style="left:67px;top:436px">Este</div>
<div style="position:absolute;left:49.0px;top:462px;width:14.0px;height:0;border-top:1px dotted #9a9a9a"></div>
<div class="tn" style="left:67px;top:454px">Norte</div>
<div style="position:absolute;left:49.0px;top:480px;width:14.0px;height:0;border-top:1px dotted #9a9a9a"></div>
<div class="tn" style="left:67px;top:472px">Oeste</div>
<div style="position:absolute;left:49.0px;top:498px;width:14.0px;height:0;border-top:1px dotted #9a9a9a"></div>
<div class="tn" style="left:67px;top:490px">Sur</div>
<div style="position:absolute;left:9.0px;top:516px;width:11.0px;height:0;border-top:1px dotted #9a9a9a"></div>
<svg style="left:21.5px;top:508px" width="16" height="16" viewBox="0 0 16 16"><rect x="1" y="1.500" width="14" height="13" fill="#f4f4f4" stroke="#333" stroke-width="1.200"/><path d="M1 4h14" stroke="#333" stroke-width="1.500"/><rect x="3" y="6" width="3" height="2.500" fill="#555"/><circle cx="4.500" cy="11.500" r="1.600" fill="#555"/><path d="M7.500 6.500h2M10.500 6.500h3M7.500 9h3M7.500 11.500h5" stroke="#444" stroke-width="1"/></svg>
<div class="tn" style="left:42.6px;top:508px">Leyendas</div>
<div style="position:absolute;left:13.0px;top:534px;width:7.0px;height:0;border-top:1px dotted #9a9a9a"></div>
<svg style="left:4.5px;top:529.5px;z-index:3" width="9" height="9"><rect x="0.500" y="0.500" width="8" height="8" fill="#fff" stroke="#8a8a8a" stroke-width="1"/><path d="M2 4.500h5M4.500 2v5" stroke="#333" stroke-width="1"/></svg>
<svg style="left:21.5px;top:526px" width="16" height="16" viewBox="0 0 16 16"><rect x="1" y="2" width="14" height="12" fill="#fff" stroke="#333" stroke-width="1.200"/><path d="M1 3.500h14" stroke="#333" stroke-width="2"/><path d="M1 7h14M1 10.500h14M5.500 4v10M10.500 4v10" stroke="#333" stroke-width="0.900"/></svg>
<div class="tn" style="left:42.6px;top:526px">Tablas de planificación/Cantidades (to</div>
<div style="position:absolute;left:9.0px;top:552px;width:11.0px;height:0;border-top:1px dotted #9a9a9a"></div>
<svg style="left:21.5px;top:544px" width="16" height="16" viewBox="0 0 16 16"><path d="M1.500 1.500H11L14.500 5V14.500H1.500Z" fill="#fff" stroke="#333" stroke-width="1.200"/><path d="M3.500 9.500h4v3h-4zM8.500 7h4v5.500h-4z" fill="#ddd" stroke="#444" stroke-width="0.900"/></svg>
<div class="tn" style="left:42.6px;top:544px">Planos (todo)</div>
<div style="position:absolute;left:13.0px;top:570px;width:7.0px;height:0;border-top:1px dotted #9a9a9a"></div>
<svg style="left:4.5px;top:565.5px;z-index:3" width="9" height="9"><rect x="0.500" y="0.500" width="8" height="8" fill="#fff" stroke="#8a8a8a" stroke-width="1"/><path d="M2 4.500h5M4.500 2v5" stroke="#333" stroke-width="1"/></svg>
<svg style="left:21.5px;top:562px" width="16" height="16" viewBox="0 0 16 16"><path d="M2 2h6v6H2zM9 2h4.500v11H2V9.500h7z" fill="#eee" stroke="#333" stroke-width="1.200"/></svg>
<div class="tn" style="left:42.6px;top:562px">Familias</div>
<div style="position:absolute;left:13.0px;top:588px;width:7.0px;height:0;border-top:1px dotted #9a9a9a"></div>
<svg style="left:4.5px;top:583.5px;z-index:3" width="9" height="9"><rect x="0.500" y="0.500" width="8" height="8" fill="#fff" stroke="#8a8a8a" stroke-width="1"/><path d="M2 4.500h5M4.500 2v5" stroke="#333" stroke-width="1"/></svg>
<svg style="left:21.5px;top:580px" width="16" height="16" viewBox="0 0 16 16"><path d="M1.500 4V1.500H4M12 1.500H14.500V4M14.500 12V14.500H12M4 14.500H1.500V12" fill="none" stroke="#333" stroke-width="1.100"/><circle cx="7" cy="7" r="3.500" fill="#ddd" stroke="#444" stroke-width="1"/><rect x="6.500" y="6.500" width="5.500" height="5.500" fill="#eee" stroke="#444" stroke-width="1"/></svg>
<div class="tn" style="left:42.6px;top:580px">Grupos</div>
<div style="position:absolute;left:13.0px;top:606px;width:7.0px;height:0;border-top:1px dotted #9a9a9a"></div>
<svg style="left:4.5px;top:601.5px;z-index:3" width="9" height="9"><rect x="0.500" y="0.500" width="8" height="8" fill="#fff" stroke="#8a8a8a" stroke-width="1"/><path d="M2 4.500h5" stroke="#333" stroke-width="1"/></svg>
<svg style="left:21.5px;top:598px" width="16" height="16" viewBox="0 0 16 16"><rect x="0.500" y="5" width="8" height="5.500" rx="2.700" fill="none" stroke="#c8951a" stroke-width="1.800"/><rect x="7.500" y="5" width="8" height="5.500" rx="2.700" fill="none" stroke="#c8951a" stroke-width="1.800"/></svg>
<div class="tn" style="left:42.6px;top:598px">Vínculos de Revit</div>
<div style="position:absolute;left:29.5px;top:624px;width:10.5px;height:0;border-top:1px dotted #9a9a9a"></div>
<svg style="left:41px;top:617px" width="14" height="14" viewBox="0 0 14 14"><path d="M4.500 1h5v5.500h3.500L7 13 1 6.500h3.500z" fill="#2a78d8" stroke="#1550a8" stroke-width="0.800"/></svg>
<div class="tn" style="left:63.3px;top:616px;letter-spacing:-0.040px">00-IBIM_Aguas lluvias.rvt</div>
<div style="position:absolute;left:29.5px;top:642px;width:10.5px;height:0;border-top:1px dotted #9a9a9a"></div>
<svg style="left:41px;top:635px" width="14" height="14" viewBox="0 0 14 14"><path d="M4.500 1h5v5.500h3.500L7 13 1 6.500h3.500z" fill="#2a78d8" stroke="#1550a8" stroke-width="0.800"/></svg>
<div class="tn" style="left:63.3px;top:634px;letter-spacing:-0.040px">00-IBIM_Alcantarillado.rvt</div>
<div style="position:absolute;left:29.5px;top:660px;width:10.5px;height:0;border-top:1px dotted #9a9a9a"></div>
<svg style="left:41px;top:653px" width="14" height="14" viewBox="0 0 14 14"><path d="M4.500 1h5v5.500h3.500L7 13 1 6.500h3.500z" fill="#2a78d8" stroke="#1550a8" stroke-width="0.800"/></svg>
<div class="tn" style="left:63.3px;top:652px;letter-spacing:-0.040px">00-IBIM_Calculo.rvt</div>
<div style="position:absolute;left:29.5px;top:678px;width:10.5px;height:0;border-top:1px dotted #9a9a9a"></div>
<svg style="left:41px;top:671px" width="14" height="14" viewBox="0 0 14 14"><path d="M4.500 1h5v5.500h3.500L7 13 1 6.500h3.500z" fill="#2a78d8" stroke="#1550a8" stroke-width="0.800"/></svg>
<div class="tn" style="left:63.3px;top:670px;letter-spacing:-0.040px">00-IBIM_Clima.rvt</div>
<div style="position:absolute;left:29.5px;top:696px;width:10.5px;height:0;border-top:1px dotted #9a9a9a"></div>
<svg style="left:41px;top:689px" width="14" height="14" viewBox="0 0 14 14"><path d="M4.500 1h5v5.500h3.500L7 13 1 6.500h3.500z" fill="#2a78d8" stroke="#1550a8" stroke-width="0.800"/></svg>
<div class="tn" style="left:63.3px;top:688px;letter-spacing:-0.040px">00-IBIM_Electrico.rvt</div>
<div style="position:absolute;left:29.5px;top:714px;width:10.5px;height:0;border-top:1px dotted #9a9a9a"></div>
<svg style="left:41px;top:707px" width="14" height="14" viewBox="0 0 14 14"><path d="M4.500 1h5v5.500h3.500L7 13 1 6.500h3.500z" fill="#2a78d8" stroke="#1550a8" stroke-width="0.800"/></svg>
<div class="tn" style="left:63.3px;top:706px;letter-spacing:-0.040px">00-IBIM_Gas.rvt</div>
<div style="position:absolute;left:29.5px;top:732px;width:10.5px;height:0;border-top:1px dotted #9a9a9a"></div>
<svg style="left:41px;top:725px" width="14" height="14" viewBox="0 0 14 14"><path d="M2 2L12 12M12 2L2 12" stroke="#e8333a" stroke-width="2.800" stroke-linecap="round"/></svg>
<div class="tn" style="left:63.3px;top:724px;letter-spacing:-0.040px">IBIM_Arquitectura.rvt</div>
<div style="position:absolute;left:29.5px;top:39px;width:0;height:387px;border-left:1px dotted #9a9a9a"></div>
<div style="position:absolute;left:49.0px;top:57px;width:0;height:153px;border-left:1px dotted #9a9a9a"></div>
<div style="position:absolute;left:49.0px;top:237px;width:0;height:45px;border-left:1px dotted #9a9a9a"></div>
<div style="position:absolute;left:49.0px;top:309px;width:0;height:99px;border-left:1px dotted #9a9a9a"></div>
<div style="position:absolute;left:49.0px;top:435px;width:0;height:63px;border-left:1px dotted #9a9a9a"></div>
<div style="position:absolute;left:29.5px;top:615px;width:0;height:117px;border-left:1px dotted #9a9a9a"></div><div style="position:absolute;left:0;top:825px;width:240px;height:19px;background:#f0f0f0"></div>
<div style="position:absolute;left:18px;top:827px;width:185px;height:15px;background:#cdcdcd"></div>
<svg style="left:6px;top:829px" width="8" height="11"><path d="M6.500 1L2 5.500L6.500 10" fill="none" stroke="#333" stroke-width="1.800"/></svg>
<svg style="left:228px;top:829px" width="8" height="11"><path d="M1.500 1L6 5.500L1.500 10" fill="none" stroke="#333" stroke-width="1.800"/></svg>

</div>
<div id="status" class="abs">
<div style="position:absolute;left:2px;top:6px;font-size:12px;letter-spacing:-0.230px;color:#111;white-space:nowrap">Clic para seleccionar, TAB para alternar, CTRL para añadir y MAYÚS para anular una selección.</div>
<svg style="left:892px;top:4px" width="17" height="17" viewBox="0 0 17 17"><circle cx="7" cy="4" r="2.500" fill="#7ab0e0" stroke="#2a5a9a" stroke-width="0.900"/><path d="M2.500 14v-4a3 3 0 0 1 3-3h3a3 3 0 0 1 3 3v4z" fill="#7ab0e0" stroke="#2a5a9a" stroke-width="0.900"/><path d="M10 8h5v8h-5z" fill="#f6e8a0" stroke="#7a6a20" stroke-width="0.900"/></svg>
<div style="position:absolute;left:918px;top:5px;width:203px;height:18px;background:#fff"></div>
<svg style="left:1107px;top:11px" width="10" height="6"><path d="M1 1L5 5L9 1" fill="none" stroke="#bbb" stroke-width="1.100"/></svg>
<svg style="left:1129px;top:4px" width="17" height="17" viewBox="0 0 17 17"><path d="M4 2h9l2 3h-3v3l-4 2v6H2v-5l3-2V5H4z" fill="#a8a8a8" stroke="#8a8a8a" stroke-width="0.800"/></svg>
<div style="position:absolute;left:1150px;top:6px;font-size:12px;color:#111">:0</div>
<svg style="left:1182px;top:4px" width="18" height="17" viewBox="0 0 18 17"><rect x="1.500" y="1.500" width="15" height="14" fill="#fff" stroke="#333" stroke-width="1.300"/><path d="M1.500 4h15" stroke="#333" stroke-width="1.600"/><path d="M4 7.500h2M4 10.500h2M4 13h2" stroke="#333" stroke-width="1.400"/><path d="M8 7.500h6M8 10.500h6M8 13h6" stroke="#333" stroke-width="1"/></svg>
<svg style="left:1209px;top:4px" width="17" height="17" viewBox="0 0 17 17"><rect x="4" y="1" width="12" height="13" fill="#b0b0b0"/><path d="M1 11h7l-2.500-2.500M8 11l-2.500 2.500M3 13v2.500h9" fill="none" stroke="#9a9a9a" stroke-width="1.200"/></svg>
<div style="position:absolute;left:1232px;top:5px;width:206px;height:18px;background:#fff"></div>
<div style="position:absolute;left:1236px;top:6px;font-size:12px;letter-spacing:-0.100px;color:#8a8a8a">Modelo base</div>
<svg style="left:1424px;top:11px" width="10" height="6"><path d="M1 1L5 5L9 1" fill="none" stroke="#aaa" stroke-width="1.100"/></svg>
<svg style="left:1666px;top:4px" width="185" height="18" viewBox="0 0 185 18">
<rect x="1" y="3" width="7" height="4.500" rx="2.200" fill="none" stroke="#c8951a" stroke-width="1.500"/><rect x="6.500" y="3" width="7" height="4.500" rx="2.200" fill="none" stroke="#c8951a" stroke-width="1.500"/><path d="M9 6v9l2.500-2 1.500 3.500 1.500-0.700-1.500-3.300h3z" fill="#fff" stroke="#222" stroke-width="0.900"/>
<path d="M27 12l8-7M27 12h8M29 15h7" stroke="#2a6ac0" stroke-width="1.200" fill="none"/><path d="M36 2l5 5M41 2l-5 5" stroke="#e0202a" stroke-width="1.800"/><path d="M36 8v7l2-1.500 1.200 2.800 1.200-0.600-1.200-2.700h2.500z" fill="#fff" stroke="#222" stroke-width="0.800"/>
<path d="M54 2h8v2.500h-1.500v3.500l2 2h-9l2-2V4.500H54z" fill="#f0b070" stroke="#c06a20" stroke-width="0.900"/><path d="M58 10v6" stroke="#8a4a10" stroke-width="1.200"/><path d="M62 8v7l2-1.500 1.200 2.800 1.200-0.600-1.200-2.700h2.500z" fill="#fff" stroke="#222" stroke-width="0.800"/>
<path d="M80 4l6-2v11l-6 2.500z" fill="#eaf2ff" stroke="#2a6ac0" stroke-width="1.200"/><path d="M87 2l5 5M92 2l-5 5" stroke="#e0202a" stroke-width="1.800"/><path d="M87 8v7l2-1.500 1.200 2.800 1.200-0.600-1.200-2.700h2.500z" fill="#fff" stroke="#222" stroke-width="0.800"/>
<path d="M107 6h9M111.500 1.500v9M107 6l1.500-1.500M107 6l1.500 1.500M116 6l-1.500-1.500M116 6l-1.500 1.500M111.500 1.500l-1.500 1.500M111.500 1.500l1.500 1.500M111.500 10.500l-1.500-1.500M111.500 10.500l1.500-1.500" stroke="#222" stroke-width="0.900" fill="none"/><path d="M114 7v8.500l2.300-1.800 1.400 3 1.400-0.700-1.400-2.900h2.800z" fill="#fff" stroke="#222" stroke-width="0.800"/>
<circle cx="139.500" cy="10" r="4.500" fill="none" stroke="#b8b8b8" stroke-width="2.200" stroke-dasharray="2.500 1.500"/>
<path d="M156 4h13l-5 5.500v6h-3v-6z" fill="#d8d8d8" stroke="#555" stroke-width="1.200"/>
</svg>
<div style="position:absolute;left:1839px;top:6px;font-size:12px;color:#111">:0</div>

</div>
</body></html>
